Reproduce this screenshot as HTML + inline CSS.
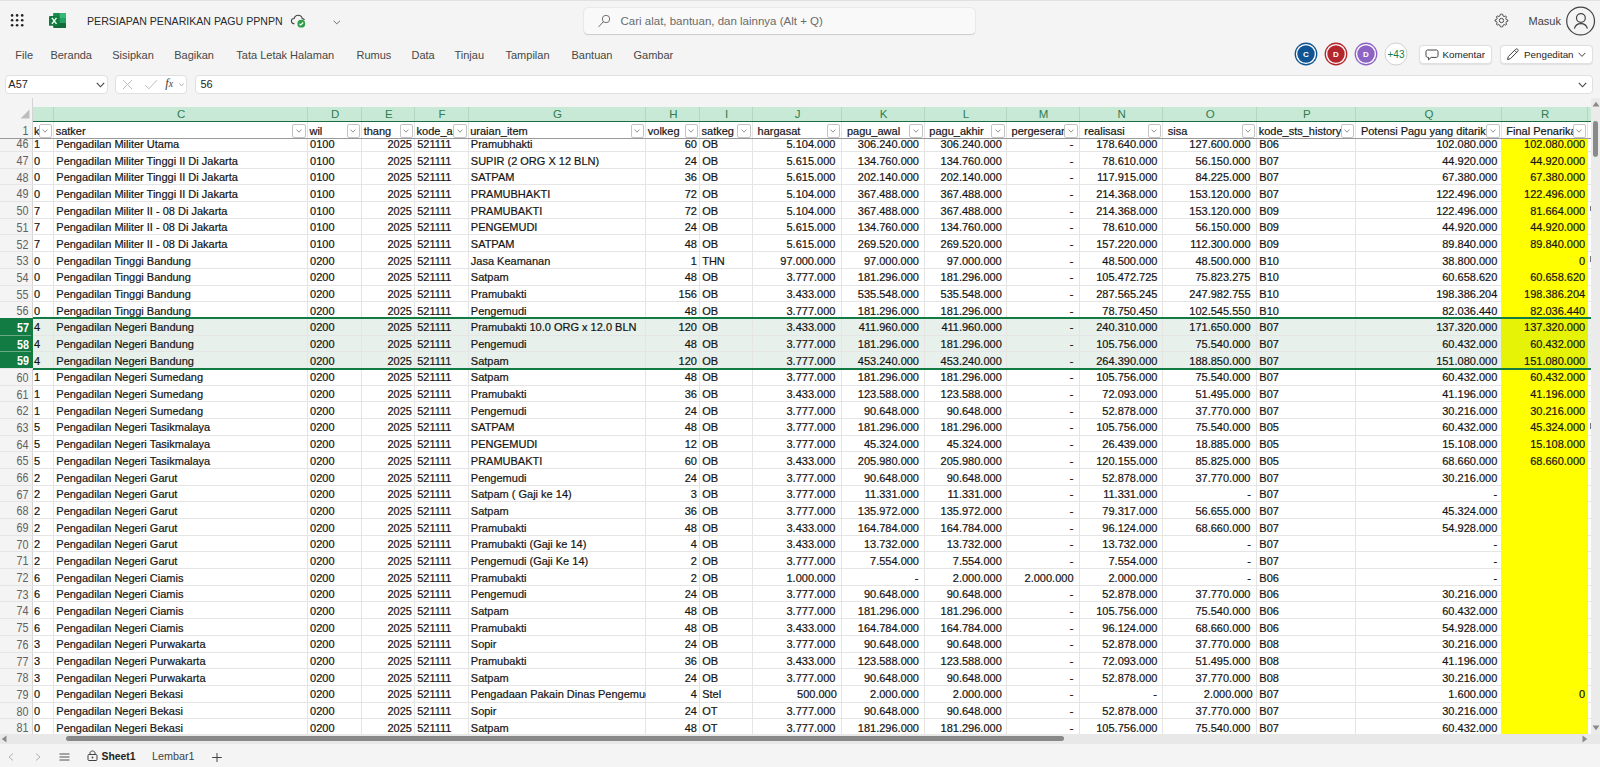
<!DOCTYPE html><html><head><meta charset="utf-8"><style>
*{box-sizing:border-box;margin:0;padding:0}
html,body{width:1600px;height:767px;overflow:hidden;background:#f4f4f4;font-family:"Liberation Sans", sans-serif;position:relative}
.a{position:absolute}
.t{position:absolute;white-space:pre;}
.c{position:absolute;white-space:pre;font-size:11px;color:#141414;-webkit-text-stroke:0.2px #141414;line-height:16.68px;height:16.68px;overflow:hidden}
.fb{position:absolute;width:13px;height:13px;background:#fff;border:1px solid #c4c4c4;border-radius:2px}
.fb svg{position:absolute;left:2.7px;top:4.3px}

</style></head><body>
<div class="a" style="left:0;top:0;width:1600px;height:1px;background:#e4dfe2"></div>
<svg class="a" style="left:9px;top:12px" width="16" height="16" viewBox="0 0 16 16"><circle cx="3.1" cy="3.4" r="1.3" fill="#242424"/><circle cx="8.1" cy="3.4" r="1.3" fill="#242424"/><circle cx="13.2" cy="3.4" r="1.3" fill="#242424"/><circle cx="3.1" cy="8.3" r="1.3" fill="#242424"/><circle cx="8.1" cy="8.3" r="1.3" fill="#242424"/><circle cx="13.2" cy="8.3" r="1.3" fill="#242424"/><circle cx="3.1" cy="13.2" r="1.3" fill="#242424"/><circle cx="8.1" cy="13.2" r="1.3" fill="#242424"/><circle cx="13.2" cy="13.2" r="1.3" fill="#242424"/></svg>
<svg class="a" style="left:49px;top:13px" width="17" height="15" viewBox="0 0 17 15">
<rect x="4.4" y="0" width="12.6" height="15" rx="0.8" fill="#1f9a5a"/>
<rect x="10.5" y="0" width="6.5" height="5" fill="#36b877"/>
<rect x="10.5" y="5" width="6.5" height="5" fill="#23a063"/>
<rect x="4.4" y="10" width="12.6" height="5" rx="0.8" fill="#146b3a"/>
<rect x="4.4" y="0" width="6.1" height="10" fill="#198a4c"/>
<rect x="0" y="3" width="10.4" height="9.8" rx="0.9" fill="#137a3f"/>
<path d="M2.9 4.9 L7.5 10.9 M7.5 4.9 L2.9 10.9" stroke="#e8fff0" stroke-width="1.5"/>
</svg>
<div class="t" style="left:87px;top:12.7px;font-size:10.6px;line-height:16px;color:#2a2a2a">PERSIAPAN PENARIKAN PAGU PPNPN</div>
<svg class="a" style="left:290px;top:13px" width="18" height="16" viewBox="0 0 18 16">
<path d="M4.5 10.8 C2.6 10.8 1.4 9.6 1.4 8.1 C1.4 6.6 2.6 5.5 4.1 5.5 C4.7 3.4 6.3 2.2 8.2 2.2 C10.3 2.2 11.9 3.7 12.3 5.6 C13.3 5.6 14.1 6.2 14.5 7" fill="none" stroke="#424242" stroke-width="1.1"/>
<circle cx="11.3" cy="10.7" r="3.9" fill="#2e9e48"/>
<path d="M9.4 10.8 L10.7 12 L13.2 9.5" fill="none" stroke="#fff" stroke-width="1.1"/>
</svg>
<svg class="a" style="left:332.5px;top:19.5px" width="8" height="5" viewBox="0 0 8 5"><path d="M0.6 0.8 L3.8 3.8 L7 0.8" fill="none" stroke="#616161" stroke-width="0.9"/></svg>
<div class="a" style="left:584px;top:7.5px;width:390.5px;height:26.5px;border-radius:4px;background:#f9f9f9;box-shadow:0 0.6px 1px rgba(0,0,0,0.14), 0 0 0 0.6px rgba(0,0,0,0.06)"></div>
<svg class="a" style="left:597px;top:14px" width="14" height="14" viewBox="0 0 14 14"><circle cx="9" cy="5" r="3.7" fill="none" stroke="#6a6a6a" stroke-width="0.95"/><path d="M6.3 7.8 L1.6 12.9" stroke="#6a6a6a" stroke-width="1"/></svg>
<div class="t" style="left:620.5px;top:13px;font-size:11.5px;line-height:16px;color:#6b6b6b">Cari alat, bantuan, dan lainnya (Alt + Q)</div>
<svg class="a" style="left:1493.5px;top:13.3px" width="15" height="15" viewBox="0 0 16 16">
<path d="M8 1.2 L9.3 1.4 L9.6 3.1 L10.8 3.8 L12.4 3.1 L13.3 4.1 L12.6 5.7 L13 7 L14.7 7.4 L14.8 8.7 L13.2 9.2 L12.7 10.5 L13.4 12 L12.5 13 L10.9 12.3 L9.7 13 L9.3 14.7 L8 14.8 L6.7 14.6 L6.3 13 L5.1 12.3 L3.5 13 L2.6 12 L3.3 10.4 L2.8 9.2 L1.2 8.7 L1.2 7.3 L2.8 6.9 L3.3 5.6 L2.6 4.1 L3.5 3.1 L5.1 3.8 L6.3 3.1 L6.7 1.4 Z" fill="none" stroke="#424242" stroke-width="1" stroke-linejoin="round"/>
<circle cx="8" cy="8" r="2.3" fill="none" stroke="#424242" stroke-width="1"/></svg>
<div class="t" style="left:1528.5px;top:13px;font-size:11px;line-height:16px;color:#424242">Masuk</div>
<svg class="a" style="left:1565px;top:6px" width="32" height="30" viewBox="0 0 32 30">
<circle cx="15.6" cy="15" r="13.9" fill="none" stroke="#424242" stroke-width="1.2"/>
<circle cx="15.9" cy="12" r="4.4" fill="none" stroke="#424242" stroke-width="1.2"/>
<path d="M9.4 22.6 C10.3 19.2 12.8 17.6 15.9 17.6 C19 17.6 21.5 19.2 22.4 22.6" fill="none" stroke="#424242" stroke-width="1.2"/>
</svg>
<div class="t" style="left:15.3px;top:46.8px;font-size:11px;line-height:16px;color:#474747">File</div>
<div class="t" style="left:50.4px;top:46.8px;font-size:11px;line-height:16px;color:#474747">Beranda</div>
<div class="t" style="left:112.2px;top:46.8px;font-size:11px;line-height:16px;color:#474747">Sisipkan</div>
<div class="t" style="left:174.2px;top:46.8px;font-size:11px;line-height:16px;color:#474747">Bagikan</div>
<div class="t" style="left:236.3px;top:46.8px;font-size:11px;line-height:16px;color:#474747">Tata Letak Halaman</div>
<div class="t" style="left:356.5px;top:46.8px;font-size:11px;line-height:16px;color:#474747">Rumus</div>
<div class="t" style="left:411.5px;top:46.8px;font-size:11px;line-height:16px;color:#474747">Data</div>
<div class="t" style="left:454.5px;top:46.8px;font-size:11px;line-height:16px;color:#474747">Tinjau</div>
<div class="t" style="left:505.5px;top:46.8px;font-size:11px;line-height:16px;color:#474747">Tampilan</div>
<div class="t" style="left:571.5px;top:46.8px;font-size:11px;line-height:16px;color:#474747">Bantuan</div>
<div class="t" style="left:633.5px;top:46.8px;font-size:11px;line-height:16px;color:#474747">Gambar</div>
<svg class="a" style="left:1294px;top:42px" width="24" height="24" viewBox="0 0 24 24">
<circle cx="12" cy="12" r="11.4" fill="#0f5493"/><circle cx="12" cy="12" r="9.4" fill="none" stroke="#fff" stroke-width="1.4"/>
<text x="12" y="14.9" text-anchor="middle" font-family="Liberation Sans" font-weight="bold" font-size="8" fill="#fff">C</text></svg>
<svg class="a" style="left:1324px;top:42px" width="24" height="24" viewBox="0 0 24 24">
<circle cx="12" cy="12" r="11.4" fill="#b3262d"/><circle cx="12" cy="12" r="9.4" fill="none" stroke="#fff" stroke-width="1.4"/>
<text x="12" y="14.9" text-anchor="middle" font-family="Liberation Sans" font-weight="bold" font-size="8" fill="#fff">D</text></svg>
<svg class="a" style="left:1354px;top:42px" width="24" height="24" viewBox="0 0 24 24">
<circle cx="12" cy="12" r="11.4" fill="#8d64c4"/><circle cx="12" cy="12" r="9.4" fill="none" stroke="#fff" stroke-width="1.4"/>
<text x="12" y="14.9" text-anchor="middle" font-family="Liberation Sans" font-weight="bold" font-size="8" fill="#fff">D</text></svg>
<svg class="a" style="left:1384px;top:42px" width="24" height="24" viewBox="0 0 24 24"><circle cx="12" cy="12" r="11" fill="#fff" stroke="#cccccc" stroke-width="0.9"/>
<text x="12" y="15.5" text-anchor="middle" font-family="Liberation Sans" font-size="10" fill="#107c41">+43</text></svg>
<div class="a" style="left:1418.5px;top:44.5px;width:73px;height:19px;background:#fff;border:1px solid #e0e0e0;border-radius:4px;box-shadow:0 0.5px 1px rgba(0,0,0,0.08)"></div>
<svg class="a" style="left:1425px;top:48.5px" width="14" height="12" viewBox="0 0 14 12"><path d="M2.6 1 H11.4 C12.3 1 13 1.7 13 2.6 V6.8 C13 7.7 12.3 8.4 11.4 8.4 H6.2 L3.6 10.8 V8.4 H2.6 C1.7 8.4 1 7.7 1 6.8 V2.6 C1 1.7 1.7 1 2.6 1 Z" fill="none" stroke="#424242" stroke-width="1"/></svg>
<div class="t" style="left:1442.5px;top:47px;font-size:9.8px;line-height:16px;color:#242424">Komentar</div>
<div class="a" style="left:1499.7px;top:44.5px;width:93.3px;height:19px;background:#fff;border:1px solid #e0e0e0;border-radius:4px;box-shadow:0 0.5px 1px rgba(0,0,0,0.08)"></div>
<svg class="a" style="left:1506px;top:47.5px" width="14" height="13" viewBox="0 0 14 13"><path d="M1.5 11.6 L2.3 8.6 L9.6 1.3 C10.2 0.7 11.1 0.7 11.7 1.3 C12.3 1.9 12.3 2.8 11.7 3.4 L4.4 10.7 Z M8.6 2.3 L10.7 4.4" fill="none" stroke="#424242" stroke-width="1"/></svg>
<div class="t" style="left:1524px;top:47px;font-size:9.8px;line-height:16px;color:#242424">Pengeditan</div>
<svg class="a" style="left:1577.5px;top:52px" width="8" height="6" viewBox="0 0 8 6"><path d="M0.6 0.8 L4 4.4 L7.4 0.8" fill="none" stroke="#424242" stroke-width="1"/></svg>
<div class="a" style="left:4.6px;top:74.5px;width:103px;height:19px;background:#fff;border:1px solid #e0e0e0;border-radius:4px"></div>
<div class="t" style="left:8.3px;top:75.5px;font-size:11px;line-height:16px;color:#242424">A57</div>
<svg class="a" style="left:96px;top:82px" width="9" height="6" viewBox="0 0 9 6"><path d="M0.8 0.8 L4.5 4.8 L8.2 0.8" fill="none" stroke="#424242" stroke-width="1.1"/></svg>
<div class="a" style="left:114.5px;top:74.5px;width:72px;height:19px;background:#fff;border:1px solid #e0e0e0;border-radius:4px"></div>
<svg class="a" style="left:121.5px;top:78.5px" width="11" height="11" viewBox="0 0 11 11"><path d="M1 1 L10 10 M10 1 L1 10" stroke="#bdbdbd" stroke-width="1"/></svg>
<svg class="a" style="left:143.5px;top:78.5px" width="14" height="11" viewBox="0 0 14 11"><path d="M1 6 L4.8 9.8 L13 1.2" fill="none" stroke="#bdbdbd" stroke-width="1"/></svg>
<div class="t" style="left:165.3px;top:75.3px;font-size:12.5px;line-height:16px;color:#424242;font-family:'Liberation Serif';font-style:italic">f<span style="font-size:10px">x</span></div>
<svg class="a" style="left:179px;top:82.5px" width="5" height="4" viewBox="0 0 5 4"><path d="M0.5 0.5 L2.5 3 L4.5 0.5" fill="none" stroke="#9e9e9e" stroke-width="0.8"/></svg>
<div class="a" style="left:194.5px;top:74.5px;width:1398.5px;height:19px;background:#fff;border:1px solid #e0e0e0;border-radius:4px"></div>
<div class="t" style="left:200.5px;top:75.5px;font-size:11px;line-height:16px;color:#242424">56</div>
<svg class="a" style="left:1577.5px;top:81.5px" width="9" height="6" viewBox="0 0 9 6"><path d="M0.8 0.8 L4.5 4.8 L8.2 0.8" fill="none" stroke="#424242" stroke-width="1.1"/></svg>
<div class="a" style="left:0;top:106.5px;width:32.5px;height:15.7px;background:#f4f4f4"></div>
<svg class="a" style="left:20px;top:109px" width="10" height="10" viewBox="0 0 10 10"><path d="M9.5 0.5 V9.5 H0.5 Z" fill="#bdbdbd"/></svg>
<div class="a" style="left:32px;top:98px;width:1px;height:636px;background:#d4d4d4"></div>
<div class="a" style="left:32.5px;top:106.5px;width:1558.5px;height:14px;background:#c9e9d7"></div>
<div class="a" style="left:32.5px;top:120.6px;width:1558.5px;height:1.7px;background:#1d6b40"></div>
<div class="a" style="left:53.0px;top:106.5px;width:1px;height:14px;background:#b2d8bf"></div>
<div class="a" style="left:306.75px;top:106.5px;width:1px;height:14px;background:#b2d8bf"></div>
<div class="a" style="left:361.0px;top:106.5px;width:1px;height:14px;background:#b2d8bf"></div>
<div class="a" style="left:413.9px;top:106.5px;width:1px;height:14px;background:#b2d8bf"></div>
<div class="a" style="left:467.5px;top:106.5px;width:1px;height:14px;background:#b2d8bf"></div>
<div class="a" style="left:645.1px;top:106.5px;width:1px;height:14px;background:#b2d8bf"></div>
<div class="a" style="left:698.9px;top:106.5px;width:1px;height:14px;background:#b2d8bf"></div>
<div class="a" style="left:751.75px;top:106.5px;width:1px;height:14px;background:#b2d8bf"></div>
<div class="a" style="left:841.1px;top:106.5px;width:1px;height:14px;background:#b2d8bf"></div>
<div class="a" style="left:923.5px;top:106.5px;width:1px;height:14px;background:#b2d8bf"></div>
<div class="a" style="left:1005.75px;top:106.5px;width:1px;height:14px;background:#b2d8bf"></div>
<div class="a" style="left:1078.5px;top:106.5px;width:1px;height:14px;background:#b2d8bf"></div>
<div class="a" style="left:1162.0px;top:106.5px;width:1px;height:14px;background:#b2d8bf"></div>
<div class="a" style="left:1256.0px;top:106.5px;width:1px;height:14px;background:#b2d8bf"></div>
<div class="a" style="left:1355.1px;top:106.5px;width:1px;height:14px;background:#b2d8bf"></div>
<div class="a" style="left:1500.5px;top:106.5px;width:1px;height:14px;background:#b2d8bf"></div>
<div class="a" style="left:1587.1px;top:106.5px;width:1px;height:14px;background:#b2d8bf"></div>
<div class="t" style="left:54.3px;top:107px;width:253.75px;text-align:center;font-size:11.5px;line-height:14px;color:#2f7d50">C</div>
<div class="t" style="left:308.05px;top:107px;width:54.25px;text-align:center;font-size:11.5px;line-height:14px;color:#2f7d50">D</div>
<div class="t" style="left:362.3px;top:107px;width:52.89999999999998px;text-align:center;font-size:11.5px;line-height:14px;color:#2f7d50">E</div>
<div class="t" style="left:415.2px;top:107px;width:53.60000000000002px;text-align:center;font-size:11.5px;line-height:14px;color:#2f7d50">F</div>
<div class="t" style="left:468.8px;top:107px;width:177.60000000000002px;text-align:center;font-size:11.5px;line-height:14px;color:#2f7d50">G</div>
<div class="t" style="left:646.4px;top:107px;width:53.799999999999955px;text-align:center;font-size:11.5px;line-height:14px;color:#2f7d50">H</div>
<div class="t" style="left:700.1999999999999px;top:107px;width:52.85000000000002px;text-align:center;font-size:11.5px;line-height:14px;color:#2f7d50">I</div>
<div class="t" style="left:753.05px;top:107px;width:89.35000000000002px;text-align:center;font-size:11.5px;line-height:14px;color:#2f7d50">J</div>
<div class="t" style="left:842.4px;top:107px;width:82.39999999999998px;text-align:center;font-size:11.5px;line-height:14px;color:#2f7d50">K</div>
<div class="t" style="left:924.8px;top:107px;width:82.25px;text-align:center;font-size:11.5px;line-height:14px;color:#2f7d50">L</div>
<div class="t" style="left:1007.05px;top:107px;width:72.75px;text-align:center;font-size:11.5px;line-height:14px;color:#2f7d50">M</div>
<div class="t" style="left:1079.8px;top:107px;width:83.5px;text-align:center;font-size:11.5px;line-height:14px;color:#2f7d50">N</div>
<div class="t" style="left:1163.3px;top:107px;width:94.0px;text-align:center;font-size:11.5px;line-height:14px;color:#2f7d50">O</div>
<div class="t" style="left:1257.3px;top:107px;width:99.09999999999991px;text-align:center;font-size:11.5px;line-height:14px;color:#2f7d50">P</div>
<div class="t" style="left:1356.3999999999999px;top:107px;width:145.4000000000001px;text-align:center;font-size:11.5px;line-height:14px;color:#2f7d50">Q</div>
<div class="t" style="left:1501.8px;top:107px;width:86.59999999999991px;text-align:center;font-size:11.5px;line-height:14px;color:#2f7d50">R</div>
<div class="a" style="left:33px;top:122.3px;width:1558px;height:611.7px;background:#fff"></div>
<div class="a" style="left:0;top:122.3px;width:32px;height:611.7px;background:#f4f4f4"></div>
<div class="a" style="left:1501px;top:138.5px;width:86.59999999999991px;height:595.5px;background:#ffff00"></div>
<div class="a" style="left:33px;top:318px;width:1468px;height:50px;background:#e7f0ea"></div>
<div class="a" style="left:1501px;top:318px;width:86.59999999999991px;height:50px;background:#e6f206"></div>
<div class="a" style="left:1587.6px;top:318px;width:3.400000000000091px;height:50px;background:#e7f0ea"></div>
<div class="a" style="left:0;top:151px;width:1501px;height:1px;background:#e5e5e5"></div>
<div class="a" style="left:1587.6px;top:151px;width:3.400000000000091px;height:1px;background:#e5e5e5"></div>
<div class="a" style="left:0;top:168px;width:1501px;height:1px;background:#e5e5e5"></div>
<div class="a" style="left:1587.6px;top:168px;width:3.400000000000091px;height:1px;background:#e5e5e5"></div>
<div class="a" style="left:0;top:184px;width:1501px;height:1px;background:#e5e5e5"></div>
<div class="a" style="left:1587.6px;top:184px;width:3.400000000000091px;height:1px;background:#e5e5e5"></div>
<div class="a" style="left:0;top:201px;width:1501px;height:1px;background:#e5e5e5"></div>
<div class="a" style="left:1587.6px;top:201px;width:3.400000000000091px;height:1px;background:#e5e5e5"></div>
<div class="a" style="left:0;top:218px;width:1501px;height:1px;background:#e5e5e5"></div>
<div class="a" style="left:1587.6px;top:218px;width:3.400000000000091px;height:1px;background:#e5e5e5"></div>
<div class="a" style="left:0;top:234px;width:1501px;height:1px;background:#e5e5e5"></div>
<div class="a" style="left:1587.6px;top:234px;width:3.400000000000091px;height:1px;background:#e5e5e5"></div>
<div class="a" style="left:0;top:251px;width:1501px;height:1px;background:#e5e5e5"></div>
<div class="a" style="left:1587.6px;top:251px;width:3.400000000000091px;height:1px;background:#e5e5e5"></div>
<div class="a" style="left:0;top:268px;width:1501px;height:1px;background:#e5e5e5"></div>
<div class="a" style="left:1587.6px;top:268px;width:3.400000000000091px;height:1px;background:#e5e5e5"></div>
<div class="a" style="left:0;top:285px;width:1501px;height:1px;background:#e5e5e5"></div>
<div class="a" style="left:1587.6px;top:285px;width:3.400000000000091px;height:1px;background:#e5e5e5"></div>
<div class="a" style="left:0;top:301px;width:1501px;height:1px;background:#e5e5e5"></div>
<div class="a" style="left:1587.6px;top:301px;width:3.400000000000091px;height:1px;background:#e5e5e5"></div>
<div class="a" style="left:0;top:318px;width:1501px;height:1px;background:#e5e5e5"></div>
<div class="a" style="left:1587.6px;top:318px;width:3.400000000000091px;height:1px;background:#e5e5e5"></div>
<div class="a" style="left:0;top:335px;width:1501px;height:1px;background:#e5e5e5"></div>
<div class="a" style="left:1587.6px;top:335px;width:3.400000000000091px;height:1px;background:#e5e5e5"></div>
<div class="a" style="left:0;top:351px;width:1501px;height:1px;background:#e5e5e5"></div>
<div class="a" style="left:1587.6px;top:351px;width:3.400000000000091px;height:1px;background:#e5e5e5"></div>
<div class="a" style="left:0;top:368px;width:1501px;height:1px;background:#e5e5e5"></div>
<div class="a" style="left:1587.6px;top:368px;width:3.400000000000091px;height:1px;background:#e5e5e5"></div>
<div class="a" style="left:0;top:385px;width:1501px;height:1px;background:#e5e5e5"></div>
<div class="a" style="left:1587.6px;top:385px;width:3.400000000000091px;height:1px;background:#e5e5e5"></div>
<div class="a" style="left:0;top:401px;width:1501px;height:1px;background:#e5e5e5"></div>
<div class="a" style="left:1587.6px;top:401px;width:3.400000000000091px;height:1px;background:#e5e5e5"></div>
<div class="a" style="left:0;top:418px;width:1501px;height:1px;background:#e5e5e5"></div>
<div class="a" style="left:1587.6px;top:418px;width:3.400000000000091px;height:1px;background:#e5e5e5"></div>
<div class="a" style="left:0;top:435px;width:1501px;height:1px;background:#e5e5e5"></div>
<div class="a" style="left:1587.6px;top:435px;width:3.400000000000091px;height:1px;background:#e5e5e5"></div>
<div class="a" style="left:0;top:451px;width:1501px;height:1px;background:#e5e5e5"></div>
<div class="a" style="left:1587.6px;top:451px;width:3.400000000000091px;height:1px;background:#e5e5e5"></div>
<div class="a" style="left:0;top:468px;width:1501px;height:1px;background:#e5e5e5"></div>
<div class="a" style="left:1587.6px;top:468px;width:3.400000000000091px;height:1px;background:#e5e5e5"></div>
<div class="a" style="left:0;top:485px;width:1501px;height:1px;background:#e5e5e5"></div>
<div class="a" style="left:1587.6px;top:485px;width:3.400000000000091px;height:1px;background:#e5e5e5"></div>
<div class="a" style="left:0;top:501px;width:1501px;height:1px;background:#e5e5e5"></div>
<div class="a" style="left:1587.6px;top:501px;width:3.400000000000091px;height:1px;background:#e5e5e5"></div>
<div class="a" style="left:0;top:518px;width:1501px;height:1px;background:#e5e5e5"></div>
<div class="a" style="left:1587.6px;top:518px;width:3.400000000000091px;height:1px;background:#e5e5e5"></div>
<div class="a" style="left:0;top:535px;width:1501px;height:1px;background:#e5e5e5"></div>
<div class="a" style="left:1587.6px;top:535px;width:3.400000000000091px;height:1px;background:#e5e5e5"></div>
<div class="a" style="left:0;top:551px;width:1501px;height:1px;background:#e5e5e5"></div>
<div class="a" style="left:1587.6px;top:551px;width:3.400000000000091px;height:1px;background:#e5e5e5"></div>
<div class="a" style="left:0;top:568px;width:1501px;height:1px;background:#e5e5e5"></div>
<div class="a" style="left:1587.6px;top:568px;width:3.400000000000091px;height:1px;background:#e5e5e5"></div>
<div class="a" style="left:0;top:585px;width:1501px;height:1px;background:#e5e5e5"></div>
<div class="a" style="left:1587.6px;top:585px;width:3.400000000000091px;height:1px;background:#e5e5e5"></div>
<div class="a" style="left:0;top:601px;width:1501px;height:1px;background:#e5e5e5"></div>
<div class="a" style="left:1587.6px;top:601px;width:3.400000000000091px;height:1px;background:#e5e5e5"></div>
<div class="a" style="left:0;top:618px;width:1501px;height:1px;background:#e5e5e5"></div>
<div class="a" style="left:1587.6px;top:618px;width:3.400000000000091px;height:1px;background:#e5e5e5"></div>
<div class="a" style="left:0;top:635px;width:1501px;height:1px;background:#e5e5e5"></div>
<div class="a" style="left:1587.6px;top:635px;width:3.400000000000091px;height:1px;background:#e5e5e5"></div>
<div class="a" style="left:0;top:652px;width:1501px;height:1px;background:#e5e5e5"></div>
<div class="a" style="left:1587.6px;top:652px;width:3.400000000000091px;height:1px;background:#e5e5e5"></div>
<div class="a" style="left:0;top:668px;width:1501px;height:1px;background:#e5e5e5"></div>
<div class="a" style="left:1587.6px;top:668px;width:3.400000000000091px;height:1px;background:#e5e5e5"></div>
<div class="a" style="left:0;top:685px;width:1501px;height:1px;background:#e5e5e5"></div>
<div class="a" style="left:1587.6px;top:685px;width:3.400000000000091px;height:1px;background:#e5e5e5"></div>
<div class="a" style="left:0;top:702px;width:1501px;height:1px;background:#e5e5e5"></div>
<div class="a" style="left:1587.6px;top:702px;width:3.400000000000091px;height:1px;background:#e5e5e5"></div>
<div class="a" style="left:0;top:718px;width:1501px;height:1px;background:#e5e5e5"></div>
<div class="a" style="left:1587.6px;top:718px;width:3.400000000000091px;height:1px;background:#e5e5e5"></div>
<div class="a" style="left:53.0px;top:138.5px;width:1px;height:595.5px;background:#e5e5e5"></div>
<div class="a" style="left:306.75px;top:138.5px;width:1px;height:595.5px;background:#e5e5e5"></div>
<div class="a" style="left:361.0px;top:138.5px;width:1px;height:595.5px;background:#e5e5e5"></div>
<div class="a" style="left:413.9px;top:138.5px;width:1px;height:595.5px;background:#e5e5e5"></div>
<div class="a" style="left:467.5px;top:138.5px;width:1px;height:595.5px;background:#e5e5e5"></div>
<div class="a" style="left:645.1px;top:138.5px;width:1px;height:595.5px;background:#e5e5e5"></div>
<div class="a" style="left:698.9px;top:138.5px;width:1px;height:595.5px;background:#e5e5e5"></div>
<div class="a" style="left:751.75px;top:138.5px;width:1px;height:595.5px;background:#e5e5e5"></div>
<div class="a" style="left:841.1px;top:138.5px;width:1px;height:595.5px;background:#e5e5e5"></div>
<div class="a" style="left:923.5px;top:138.5px;width:1px;height:595.5px;background:#e5e5e5"></div>
<div class="a" style="left:1005.75px;top:138.5px;width:1px;height:595.5px;background:#e5e5e5"></div>
<div class="a" style="left:1078.5px;top:138.5px;width:1px;height:595.5px;background:#e5e5e5"></div>
<div class="a" style="left:1162.0px;top:138.5px;width:1px;height:595.5px;background:#e5e5e5"></div>
<div class="a" style="left:1256.0px;top:138.5px;width:1px;height:595.5px;background:#e5e5e5"></div>
<div class="a" style="left:1355.1px;top:138.5px;width:1px;height:595.5px;background:#e5e5e5"></div>
<div class="t" style="left:0;top:136.42px;width:28.6px;text-align:right;font-size:10.8px;line-height:16.68px;color:#616161;transform:scaleY(1.1);transform-origin:0 60%">46</div>
<div class="t" style="left:0;top:153.1px;width:28.6px;text-align:right;font-size:10.8px;line-height:16.68px;color:#616161;transform:scaleY(1.1);transform-origin:0 60%">47</div>
<div class="t" style="left:0;top:169.78px;width:28.6px;text-align:right;font-size:10.8px;line-height:16.68px;color:#616161;transform:scaleY(1.1);transform-origin:0 60%">48</div>
<div class="t" style="left:0;top:186.45999999999998px;width:28.6px;text-align:right;font-size:10.8px;line-height:16.68px;color:#616161;transform:scaleY(1.1);transform-origin:0 60%">49</div>
<div class="t" style="left:0;top:203.14px;width:28.6px;text-align:right;font-size:10.8px;line-height:16.68px;color:#616161;transform:scaleY(1.1);transform-origin:0 60%">50</div>
<div class="t" style="left:0;top:219.82px;width:28.6px;text-align:right;font-size:10.8px;line-height:16.68px;color:#616161;transform:scaleY(1.1);transform-origin:0 60%">51</div>
<div class="t" style="left:0;top:236.5px;width:28.6px;text-align:right;font-size:10.8px;line-height:16.68px;color:#616161;transform:scaleY(1.1);transform-origin:0 60%">52</div>
<div class="t" style="left:0;top:253.18px;width:28.6px;text-align:right;font-size:10.8px;line-height:16.68px;color:#616161;transform:scaleY(1.1);transform-origin:0 60%">53</div>
<div class="t" style="left:0;top:269.86px;width:28.6px;text-align:right;font-size:10.8px;line-height:16.68px;color:#616161;transform:scaleY(1.1);transform-origin:0 60%">54</div>
<div class="t" style="left:0;top:286.53999999999996px;width:28.6px;text-align:right;font-size:10.8px;line-height:16.68px;color:#616161;transform:scaleY(1.1);transform-origin:0 60%">55</div>
<div class="t" style="left:0;top:303.22px;width:28.6px;text-align:right;font-size:10.8px;line-height:16.68px;color:#616161;transform:scaleY(1.1);transform-origin:0 60%">56</div>
<div class="a" style="left:0;top:318px;width:32.5px;height:17px;background:#127b43"></div>
<div class="t" style="left:0;top:319.9px;width:29px;text-align:right;font-size:10.8px;font-weight:bold;line-height:16.68px;color:#fff;transform:scaleY(1.1);transform-origin:0 60%">57</div>
<div class="a" style="left:0;top:335px;width:32.5px;height:16px;background:#127b43"></div>
<div class="t" style="left:0;top:336.58px;width:29px;text-align:right;font-size:10.8px;font-weight:bold;line-height:16.68px;color:#fff;transform:scaleY(1.1);transform-origin:0 60%">58</div>
<div class="a" style="left:0;top:351px;width:32.5px;height:17px;background:#127b43"></div>
<div class="t" style="left:0;top:353.26px;width:29px;text-align:right;font-size:10.8px;font-weight:bold;line-height:16.68px;color:#fff;transform:scaleY(1.1);transform-origin:0 60%">59</div>
<div class="t" style="left:0;top:369.94px;width:28.6px;text-align:right;font-size:10.8px;line-height:16.68px;color:#616161;transform:scaleY(1.1);transform-origin:0 60%">60</div>
<div class="t" style="left:0;top:386.62px;width:28.6px;text-align:right;font-size:10.8px;line-height:16.68px;color:#616161;transform:scaleY(1.1);transform-origin:0 60%">61</div>
<div class="t" style="left:0;top:403.29999999999995px;width:28.6px;text-align:right;font-size:10.8px;line-height:16.68px;color:#616161;transform:scaleY(1.1);transform-origin:0 60%">62</div>
<div class="t" style="left:0;top:419.98px;width:28.6px;text-align:right;font-size:10.8px;line-height:16.68px;color:#616161;transform:scaleY(1.1);transform-origin:0 60%">63</div>
<div class="t" style="left:0;top:436.65999999999997px;width:28.6px;text-align:right;font-size:10.8px;line-height:16.68px;color:#616161;transform:scaleY(1.1);transform-origin:0 60%">64</div>
<div class="t" style="left:0;top:453.34000000000003px;width:28.6px;text-align:right;font-size:10.8px;line-height:16.68px;color:#616161;transform:scaleY(1.1);transform-origin:0 60%">65</div>
<div class="t" style="left:0;top:470.02px;width:28.6px;text-align:right;font-size:10.8px;line-height:16.68px;color:#616161;transform:scaleY(1.1);transform-origin:0 60%">66</div>
<div class="t" style="left:0;top:486.70000000000005px;width:28.6px;text-align:right;font-size:10.8px;line-height:16.68px;color:#616161;transform:scaleY(1.1);transform-origin:0 60%">67</div>
<div class="t" style="left:0;top:503.38px;width:28.6px;text-align:right;font-size:10.8px;line-height:16.68px;color:#616161;transform:scaleY(1.1);transform-origin:0 60%">68</div>
<div class="t" style="left:0;top:520.06px;width:28.6px;text-align:right;font-size:10.8px;line-height:16.68px;color:#616161;transform:scaleY(1.1);transform-origin:0 60%">69</div>
<div class="t" style="left:0;top:536.74px;width:28.6px;text-align:right;font-size:10.8px;line-height:16.68px;color:#616161;transform:scaleY(1.1);transform-origin:0 60%">70</div>
<div class="t" style="left:0;top:553.42px;width:28.6px;text-align:right;font-size:10.8px;line-height:16.68px;color:#616161;transform:scaleY(1.1);transform-origin:0 60%">71</div>
<div class="t" style="left:0;top:570.1px;width:28.6px;text-align:right;font-size:10.8px;line-height:16.68px;color:#616161;transform:scaleY(1.1);transform-origin:0 60%">72</div>
<div class="t" style="left:0;top:586.78px;width:28.6px;text-align:right;font-size:10.8px;line-height:16.68px;color:#616161;transform:scaleY(1.1);transform-origin:0 60%">73</div>
<div class="t" style="left:0;top:603.46px;width:28.6px;text-align:right;font-size:10.8px;line-height:16.68px;color:#616161;transform:scaleY(1.1);transform-origin:0 60%">74</div>
<div class="t" style="left:0;top:620.14px;width:28.6px;text-align:right;font-size:10.8px;line-height:16.68px;color:#616161;transform:scaleY(1.1);transform-origin:0 60%">75</div>
<div class="t" style="left:0;top:636.8199999999999px;width:28.6px;text-align:right;font-size:10.8px;line-height:16.68px;color:#616161;transform:scaleY(1.1);transform-origin:0 60%">76</div>
<div class="t" style="left:0;top:653.5px;width:28.6px;text-align:right;font-size:10.8px;line-height:16.68px;color:#616161;transform:scaleY(1.1);transform-origin:0 60%">77</div>
<div class="t" style="left:0;top:670.1800000000001px;width:28.6px;text-align:right;font-size:10.8px;line-height:16.68px;color:#616161;transform:scaleY(1.1);transform-origin:0 60%">78</div>
<div class="t" style="left:0;top:686.86px;width:28.6px;text-align:right;font-size:10.8px;line-height:16.68px;color:#616161;transform:scaleY(1.1);transform-origin:0 60%">79</div>
<div class="t" style="left:0;top:703.54px;width:28.6px;text-align:right;font-size:10.8px;line-height:16.68px;color:#616161;transform:scaleY(1.1);transform-origin:0 60%">80</div>
<div class="t" style="left:0;top:720.22px;width:28.6px;text-align:right;font-size:10.8px;line-height:16.68px;color:#616161;transform:scaleY(1.1);transform-origin:0 60%">81</div>
<div class="a" style="left:0;top:335px;width:31px;height:1px;background:#6aa886"></div>
<div class="a" style="left:0;top:351px;width:31px;height:1px;background:#6aa886"></div>
<div class="c" style="left:32.5px;top:135.92px;width:21.0px;padding-left:1.5px">1</div>
<div class="c" style="left:53.5px;top:135.92px;width:253.75px;padding-left:2.8px">Pengadilan Militer Utama</div>
<div class="c" style="left:307.25px;top:135.92px;width:54.25px;padding-left:2.8px">0100</div>
<div class="c" style="left:361.5px;top:135.92px;width:52.89999999999998px;padding-right:2.5px;text-align:right">2025</div>
<div class="c" style="left:414.4px;top:135.92px;width:53.60000000000002px;padding-left:2.8px">521111</div>
<div class="c" style="left:468px;top:135.92px;width:177.60000000000002px;padding-left:2.8px">Pramubhakti</div>
<div class="c" style="left:645.6px;top:135.92px;width:53.799999999999955px;padding-right:2.5px;text-align:right">60</div>
<div class="c" style="left:699.4px;top:135.92px;width:52.85000000000002px;padding-left:2.8px">OB</div>
<div class="c" style="left:752.25px;top:135.92px;width:89.35000000000002px;padding-right:6.2px;text-align:right">5.104.000</div>
<div class="c" style="left:841.6px;top:135.92px;width:82.39999999999998px;padding-right:5.0px;text-align:right">306.240.000</div>
<div class="c" style="left:924px;top:135.92px;width:82.25px;padding-right:4.5px;text-align:right">306.240.000</div>
<div class="c" style="left:1006.25px;top:135.92px;width:72.75px;padding-right:5.5px;text-align:right">-</div>
<div class="c" style="left:1079px;top:135.92px;width:83.5px;padding-right:5.1px;text-align:right">178.640.000</div>
<div class="c" style="left:1162.5px;top:135.92px;width:94.0px;padding-right:6.0px;text-align:right">127.600.000</div>
<div class="c" style="left:1256.5px;top:135.92px;width:99.09999999999991px;padding-left:2.8px">B06</div>
<div class="c" style="left:1355.6px;top:135.92px;width:145.4000000000001px;padding-right:3.7px;text-align:right">102.080.000</div>
<div class="c" style="left:1501px;top:135.92px;width:86.59999999999991px;padding-right:2.4px;text-align:right">102.080.000</div>
<div class="c" style="left:32.5px;top:152.6px;width:21.0px;padding-left:1.5px">0</div>
<div class="c" style="left:53.5px;top:152.6px;width:253.75px;padding-left:2.8px">Pengadilan Militer Tinggi II Di Jakarta</div>
<div class="c" style="left:307.25px;top:152.6px;width:54.25px;padding-left:2.8px">0100</div>
<div class="c" style="left:361.5px;top:152.6px;width:52.89999999999998px;padding-right:2.5px;text-align:right">2025</div>
<div class="c" style="left:414.4px;top:152.6px;width:53.60000000000002px;padding-left:2.8px">521111</div>
<div class="c" style="left:468px;top:152.6px;width:177.60000000000002px;padding-left:2.8px">SUPIR (2 ORG X 12 BLN)</div>
<div class="c" style="left:645.6px;top:152.6px;width:53.799999999999955px;padding-right:2.5px;text-align:right">24</div>
<div class="c" style="left:699.4px;top:152.6px;width:52.85000000000002px;padding-left:2.8px">OB</div>
<div class="c" style="left:752.25px;top:152.6px;width:89.35000000000002px;padding-right:6.2px;text-align:right">5.615.000</div>
<div class="c" style="left:841.6px;top:152.6px;width:82.39999999999998px;padding-right:5.0px;text-align:right">134.760.000</div>
<div class="c" style="left:924px;top:152.6px;width:82.25px;padding-right:4.5px;text-align:right">134.760.000</div>
<div class="c" style="left:1006.25px;top:152.6px;width:72.75px;padding-right:5.5px;text-align:right">-</div>
<div class="c" style="left:1079px;top:152.6px;width:83.5px;padding-right:5.1px;text-align:right">78.610.000</div>
<div class="c" style="left:1162.5px;top:152.6px;width:94.0px;padding-right:6.0px;text-align:right">56.150.000</div>
<div class="c" style="left:1256.5px;top:152.6px;width:99.09999999999991px;padding-left:2.8px">B07</div>
<div class="c" style="left:1355.6px;top:152.6px;width:145.4000000000001px;padding-right:3.7px;text-align:right">44.920.000</div>
<div class="c" style="left:1501px;top:152.6px;width:86.59999999999991px;padding-right:2.4px;text-align:right">44.920.000</div>
<div class="c" style="left:32.5px;top:169.28px;width:21.0px;padding-left:1.5px">0</div>
<div class="c" style="left:53.5px;top:169.28px;width:253.75px;padding-left:2.8px">Pengadilan Militer Tinggi II Di Jakarta</div>
<div class="c" style="left:307.25px;top:169.28px;width:54.25px;padding-left:2.8px">0100</div>
<div class="c" style="left:361.5px;top:169.28px;width:52.89999999999998px;padding-right:2.5px;text-align:right">2025</div>
<div class="c" style="left:414.4px;top:169.28px;width:53.60000000000002px;padding-left:2.8px">521111</div>
<div class="c" style="left:468px;top:169.28px;width:177.60000000000002px;padding-left:2.8px">SATPAM</div>
<div class="c" style="left:645.6px;top:169.28px;width:53.799999999999955px;padding-right:2.5px;text-align:right">36</div>
<div class="c" style="left:699.4px;top:169.28px;width:52.85000000000002px;padding-left:2.8px">OB</div>
<div class="c" style="left:752.25px;top:169.28px;width:89.35000000000002px;padding-right:6.2px;text-align:right">5.615.000</div>
<div class="c" style="left:841.6px;top:169.28px;width:82.39999999999998px;padding-right:5.0px;text-align:right">202.140.000</div>
<div class="c" style="left:924px;top:169.28px;width:82.25px;padding-right:4.5px;text-align:right">202.140.000</div>
<div class="c" style="left:1006.25px;top:169.28px;width:72.75px;padding-right:5.5px;text-align:right">-</div>
<div class="c" style="left:1079px;top:169.28px;width:83.5px;padding-right:5.1px;text-align:right">117.915.000</div>
<div class="c" style="left:1162.5px;top:169.28px;width:94.0px;padding-right:6.0px;text-align:right">84.225.000</div>
<div class="c" style="left:1256.5px;top:169.28px;width:99.09999999999991px;padding-left:2.8px">B07</div>
<div class="c" style="left:1355.6px;top:169.28px;width:145.4000000000001px;padding-right:3.7px;text-align:right">67.380.000</div>
<div class="c" style="left:1501px;top:169.28px;width:86.59999999999991px;padding-right:2.4px;text-align:right">67.380.000</div>
<div class="c" style="left:32.5px;top:185.96px;width:21.0px;padding-left:1.5px">0</div>
<div class="c" style="left:53.5px;top:185.96px;width:253.75px;padding-left:2.8px">Pengadilan Militer Tinggi II Di Jakarta</div>
<div class="c" style="left:307.25px;top:185.96px;width:54.25px;padding-left:2.8px">0100</div>
<div class="c" style="left:361.5px;top:185.96px;width:52.89999999999998px;padding-right:2.5px;text-align:right">2025</div>
<div class="c" style="left:414.4px;top:185.96px;width:53.60000000000002px;padding-left:2.8px">521111</div>
<div class="c" style="left:468px;top:185.96px;width:177.60000000000002px;padding-left:2.8px">PRAMUBHAKTI</div>
<div class="c" style="left:645.6px;top:185.96px;width:53.799999999999955px;padding-right:2.5px;text-align:right">72</div>
<div class="c" style="left:699.4px;top:185.96px;width:52.85000000000002px;padding-left:2.8px">OB</div>
<div class="c" style="left:752.25px;top:185.96px;width:89.35000000000002px;padding-right:6.2px;text-align:right">5.104.000</div>
<div class="c" style="left:841.6px;top:185.96px;width:82.39999999999998px;padding-right:5.0px;text-align:right">367.488.000</div>
<div class="c" style="left:924px;top:185.96px;width:82.25px;padding-right:4.5px;text-align:right">367.488.000</div>
<div class="c" style="left:1006.25px;top:185.96px;width:72.75px;padding-right:5.5px;text-align:right">-</div>
<div class="c" style="left:1079px;top:185.96px;width:83.5px;padding-right:5.1px;text-align:right">214.368.000</div>
<div class="c" style="left:1162.5px;top:185.96px;width:94.0px;padding-right:6.0px;text-align:right">153.120.000</div>
<div class="c" style="left:1256.5px;top:185.96px;width:99.09999999999991px;padding-left:2.8px">B07</div>
<div class="c" style="left:1355.6px;top:185.96px;width:145.4000000000001px;padding-right:3.7px;text-align:right">122.496.000</div>
<div class="c" style="left:1501px;top:185.96px;width:86.59999999999991px;padding-right:2.4px;text-align:right">122.496.000</div>
<div class="c" style="left:32.5px;top:202.64px;width:21.0px;padding-left:1.5px">7</div>
<div class="c" style="left:53.5px;top:202.64px;width:253.75px;padding-left:2.8px">Pengadilan Militer II - 08 Di Jakarta</div>
<div class="c" style="left:307.25px;top:202.64px;width:54.25px;padding-left:2.8px">0100</div>
<div class="c" style="left:361.5px;top:202.64px;width:52.89999999999998px;padding-right:2.5px;text-align:right">2025</div>
<div class="c" style="left:414.4px;top:202.64px;width:53.60000000000002px;padding-left:2.8px">521111</div>
<div class="c" style="left:468px;top:202.64px;width:177.60000000000002px;padding-left:2.8px">PRAMUBAKTI</div>
<div class="c" style="left:645.6px;top:202.64px;width:53.799999999999955px;padding-right:2.5px;text-align:right">72</div>
<div class="c" style="left:699.4px;top:202.64px;width:52.85000000000002px;padding-left:2.8px">OB</div>
<div class="c" style="left:752.25px;top:202.64px;width:89.35000000000002px;padding-right:6.2px;text-align:right">5.104.000</div>
<div class="c" style="left:841.6px;top:202.64px;width:82.39999999999998px;padding-right:5.0px;text-align:right">367.488.000</div>
<div class="c" style="left:924px;top:202.64px;width:82.25px;padding-right:4.5px;text-align:right">367.488.000</div>
<div class="c" style="left:1006.25px;top:202.64px;width:72.75px;padding-right:5.5px;text-align:right">-</div>
<div class="c" style="left:1079px;top:202.64px;width:83.5px;padding-right:5.1px;text-align:right">214.368.000</div>
<div class="c" style="left:1162.5px;top:202.64px;width:94.0px;padding-right:6.0px;text-align:right">153.120.000</div>
<div class="c" style="left:1256.5px;top:202.64px;width:99.09999999999991px;padding-left:2.8px">B09</div>
<div class="c" style="left:1355.6px;top:202.64px;width:145.4000000000001px;padding-right:3.7px;text-align:right">122.496.000</div>
<div class="c" style="left:1501px;top:202.64px;width:86.59999999999991px;padding-right:2.4px;text-align:right">81.664.000</div>
<div class="c" style="left:32.5px;top:219.32px;width:21.0px;padding-left:1.5px">7</div>
<div class="c" style="left:53.5px;top:219.32px;width:253.75px;padding-left:2.8px">Pengadilan Militer II - 08 Di Jakarta</div>
<div class="c" style="left:307.25px;top:219.32px;width:54.25px;padding-left:2.8px">0100</div>
<div class="c" style="left:361.5px;top:219.32px;width:52.89999999999998px;padding-right:2.5px;text-align:right">2025</div>
<div class="c" style="left:414.4px;top:219.32px;width:53.60000000000002px;padding-left:2.8px">521111</div>
<div class="c" style="left:468px;top:219.32px;width:177.60000000000002px;padding-left:2.8px">PENGEMUDI</div>
<div class="c" style="left:645.6px;top:219.32px;width:53.799999999999955px;padding-right:2.5px;text-align:right">24</div>
<div class="c" style="left:699.4px;top:219.32px;width:52.85000000000002px;padding-left:2.8px">OB</div>
<div class="c" style="left:752.25px;top:219.32px;width:89.35000000000002px;padding-right:6.2px;text-align:right">5.615.000</div>
<div class="c" style="left:841.6px;top:219.32px;width:82.39999999999998px;padding-right:5.0px;text-align:right">134.760.000</div>
<div class="c" style="left:924px;top:219.32px;width:82.25px;padding-right:4.5px;text-align:right">134.760.000</div>
<div class="c" style="left:1006.25px;top:219.32px;width:72.75px;padding-right:5.5px;text-align:right">-</div>
<div class="c" style="left:1079px;top:219.32px;width:83.5px;padding-right:5.1px;text-align:right">78.610.000</div>
<div class="c" style="left:1162.5px;top:219.32px;width:94.0px;padding-right:6.0px;text-align:right">56.150.000</div>
<div class="c" style="left:1256.5px;top:219.32px;width:99.09999999999991px;padding-left:2.8px">B09</div>
<div class="c" style="left:1355.6px;top:219.32px;width:145.4000000000001px;padding-right:3.7px;text-align:right">44.920.000</div>
<div class="c" style="left:1501px;top:219.32px;width:86.59999999999991px;padding-right:2.4px;text-align:right">44.920.000</div>
<div class="c" style="left:32.5px;top:236.0px;width:21.0px;padding-left:1.5px">7</div>
<div class="c" style="left:53.5px;top:236.0px;width:253.75px;padding-left:2.8px">Pengadilan Militer II - 08 Di Jakarta</div>
<div class="c" style="left:307.25px;top:236.0px;width:54.25px;padding-left:2.8px">0100</div>
<div class="c" style="left:361.5px;top:236.0px;width:52.89999999999998px;padding-right:2.5px;text-align:right">2025</div>
<div class="c" style="left:414.4px;top:236.0px;width:53.60000000000002px;padding-left:2.8px">521111</div>
<div class="c" style="left:468px;top:236.0px;width:177.60000000000002px;padding-left:2.8px">SATPAM</div>
<div class="c" style="left:645.6px;top:236.0px;width:53.799999999999955px;padding-right:2.5px;text-align:right">48</div>
<div class="c" style="left:699.4px;top:236.0px;width:52.85000000000002px;padding-left:2.8px">OB</div>
<div class="c" style="left:752.25px;top:236.0px;width:89.35000000000002px;padding-right:6.2px;text-align:right">5.615.000</div>
<div class="c" style="left:841.6px;top:236.0px;width:82.39999999999998px;padding-right:5.0px;text-align:right">269.520.000</div>
<div class="c" style="left:924px;top:236.0px;width:82.25px;padding-right:4.5px;text-align:right">269.520.000</div>
<div class="c" style="left:1006.25px;top:236.0px;width:72.75px;padding-right:5.5px;text-align:right">-</div>
<div class="c" style="left:1079px;top:236.0px;width:83.5px;padding-right:5.1px;text-align:right">157.220.000</div>
<div class="c" style="left:1162.5px;top:236.0px;width:94.0px;padding-right:6.0px;text-align:right">112.300.000</div>
<div class="c" style="left:1256.5px;top:236.0px;width:99.09999999999991px;padding-left:2.8px">B09</div>
<div class="c" style="left:1355.6px;top:236.0px;width:145.4000000000001px;padding-right:3.7px;text-align:right">89.840.000</div>
<div class="c" style="left:1501px;top:236.0px;width:86.59999999999991px;padding-right:2.4px;text-align:right">89.840.000</div>
<div class="c" style="left:32.5px;top:252.68px;width:21.0px;padding-left:1.5px">0</div>
<div class="c" style="left:53.5px;top:252.68px;width:253.75px;padding-left:2.8px">Pengadilan Tinggi Bandung</div>
<div class="c" style="left:307.25px;top:252.68px;width:54.25px;padding-left:2.8px">0200</div>
<div class="c" style="left:361.5px;top:252.68px;width:52.89999999999998px;padding-right:2.5px;text-align:right">2025</div>
<div class="c" style="left:414.4px;top:252.68px;width:53.60000000000002px;padding-left:2.8px">521111</div>
<div class="c" style="left:468px;top:252.68px;width:177.60000000000002px;padding-left:2.8px">Jasa Keamanan</div>
<div class="c" style="left:645.6px;top:252.68px;width:53.799999999999955px;padding-right:2.5px;text-align:right">1</div>
<div class="c" style="left:699.4px;top:252.68px;width:52.85000000000002px;padding-left:2.8px">THN</div>
<div class="c" style="left:752.25px;top:252.68px;width:89.35000000000002px;padding-right:6.2px;text-align:right">97.000.000</div>
<div class="c" style="left:841.6px;top:252.68px;width:82.39999999999998px;padding-right:5.0px;text-align:right">97.000.000</div>
<div class="c" style="left:924px;top:252.68px;width:82.25px;padding-right:4.5px;text-align:right">97.000.000</div>
<div class="c" style="left:1006.25px;top:252.68px;width:72.75px;padding-right:5.5px;text-align:right">-</div>
<div class="c" style="left:1079px;top:252.68px;width:83.5px;padding-right:5.1px;text-align:right">48.500.000</div>
<div class="c" style="left:1162.5px;top:252.68px;width:94.0px;padding-right:6.0px;text-align:right">48.500.000</div>
<div class="c" style="left:1256.5px;top:252.68px;width:99.09999999999991px;padding-left:2.8px">B10</div>
<div class="c" style="left:1355.6px;top:252.68px;width:145.4000000000001px;padding-right:3.7px;text-align:right">38.800.000</div>
<div class="c" style="left:1501px;top:252.68px;width:86.59999999999991px;padding-right:2.4px;text-align:right">0</div>
<div class="c" style="left:32.5px;top:269.36px;width:21.0px;padding-left:1.5px">0</div>
<div class="c" style="left:53.5px;top:269.36px;width:253.75px;padding-left:2.8px">Pengadilan Tinggi Bandung</div>
<div class="c" style="left:307.25px;top:269.36px;width:54.25px;padding-left:2.8px">0200</div>
<div class="c" style="left:361.5px;top:269.36px;width:52.89999999999998px;padding-right:2.5px;text-align:right">2025</div>
<div class="c" style="left:414.4px;top:269.36px;width:53.60000000000002px;padding-left:2.8px">521111</div>
<div class="c" style="left:468px;top:269.36px;width:177.60000000000002px;padding-left:2.8px">Satpam</div>
<div class="c" style="left:645.6px;top:269.36px;width:53.799999999999955px;padding-right:2.5px;text-align:right">48</div>
<div class="c" style="left:699.4px;top:269.36px;width:52.85000000000002px;padding-left:2.8px">OB</div>
<div class="c" style="left:752.25px;top:269.36px;width:89.35000000000002px;padding-right:6.2px;text-align:right">3.777.000</div>
<div class="c" style="left:841.6px;top:269.36px;width:82.39999999999998px;padding-right:5.0px;text-align:right">181.296.000</div>
<div class="c" style="left:924px;top:269.36px;width:82.25px;padding-right:4.5px;text-align:right">181.296.000</div>
<div class="c" style="left:1006.25px;top:269.36px;width:72.75px;padding-right:5.5px;text-align:right">-</div>
<div class="c" style="left:1079px;top:269.36px;width:83.5px;padding-right:5.1px;text-align:right">105.472.725</div>
<div class="c" style="left:1162.5px;top:269.36px;width:94.0px;padding-right:6.0px;text-align:right">75.823.275</div>
<div class="c" style="left:1256.5px;top:269.36px;width:99.09999999999991px;padding-left:2.8px">B10</div>
<div class="c" style="left:1355.6px;top:269.36px;width:145.4000000000001px;padding-right:3.7px;text-align:right">60.658.620</div>
<div class="c" style="left:1501px;top:269.36px;width:86.59999999999991px;padding-right:2.4px;text-align:right">60.658.620</div>
<div class="c" style="left:32.5px;top:286.04px;width:21.0px;padding-left:1.5px">0</div>
<div class="c" style="left:53.5px;top:286.04px;width:253.75px;padding-left:2.8px">Pengadilan Tinggi Bandung</div>
<div class="c" style="left:307.25px;top:286.04px;width:54.25px;padding-left:2.8px">0200</div>
<div class="c" style="left:361.5px;top:286.04px;width:52.89999999999998px;padding-right:2.5px;text-align:right">2025</div>
<div class="c" style="left:414.4px;top:286.04px;width:53.60000000000002px;padding-left:2.8px">521111</div>
<div class="c" style="left:468px;top:286.04px;width:177.60000000000002px;padding-left:2.8px">Pramubakti</div>
<div class="c" style="left:645.6px;top:286.04px;width:53.799999999999955px;padding-right:2.5px;text-align:right">156</div>
<div class="c" style="left:699.4px;top:286.04px;width:52.85000000000002px;padding-left:2.8px">OB</div>
<div class="c" style="left:752.25px;top:286.04px;width:89.35000000000002px;padding-right:6.2px;text-align:right">3.433.000</div>
<div class="c" style="left:841.6px;top:286.04px;width:82.39999999999998px;padding-right:5.0px;text-align:right">535.548.000</div>
<div class="c" style="left:924px;top:286.04px;width:82.25px;padding-right:4.5px;text-align:right">535.548.000</div>
<div class="c" style="left:1006.25px;top:286.04px;width:72.75px;padding-right:5.5px;text-align:right">-</div>
<div class="c" style="left:1079px;top:286.04px;width:83.5px;padding-right:5.1px;text-align:right">287.565.245</div>
<div class="c" style="left:1162.5px;top:286.04px;width:94.0px;padding-right:6.0px;text-align:right">247.982.755</div>
<div class="c" style="left:1256.5px;top:286.04px;width:99.09999999999991px;padding-left:2.8px">B10</div>
<div class="c" style="left:1355.6px;top:286.04px;width:145.4000000000001px;padding-right:3.7px;text-align:right">198.386.204</div>
<div class="c" style="left:1501px;top:286.04px;width:86.59999999999991px;padding-right:2.4px;text-align:right">198.386.204</div>
<div class="c" style="left:32.5px;top:302.72px;width:21.0px;padding-left:1.5px">0</div>
<div class="c" style="left:53.5px;top:302.72px;width:253.75px;padding-left:2.8px">Pengadilan Tinggi Bandung</div>
<div class="c" style="left:307.25px;top:302.72px;width:54.25px;padding-left:2.8px">0200</div>
<div class="c" style="left:361.5px;top:302.72px;width:52.89999999999998px;padding-right:2.5px;text-align:right">2025</div>
<div class="c" style="left:414.4px;top:302.72px;width:53.60000000000002px;padding-left:2.8px">521111</div>
<div class="c" style="left:468px;top:302.72px;width:177.60000000000002px;padding-left:2.8px">Pengemudi</div>
<div class="c" style="left:645.6px;top:302.72px;width:53.799999999999955px;padding-right:2.5px;text-align:right">48</div>
<div class="c" style="left:699.4px;top:302.72px;width:52.85000000000002px;padding-left:2.8px">OB</div>
<div class="c" style="left:752.25px;top:302.72px;width:89.35000000000002px;padding-right:6.2px;text-align:right">3.777.000</div>
<div class="c" style="left:841.6px;top:302.72px;width:82.39999999999998px;padding-right:5.0px;text-align:right">181.296.000</div>
<div class="c" style="left:924px;top:302.72px;width:82.25px;padding-right:4.5px;text-align:right">181.296.000</div>
<div class="c" style="left:1006.25px;top:302.72px;width:72.75px;padding-right:5.5px;text-align:right">-</div>
<div class="c" style="left:1079px;top:302.72px;width:83.5px;padding-right:5.1px;text-align:right">78.750.450</div>
<div class="c" style="left:1162.5px;top:302.72px;width:94.0px;padding-right:6.0px;text-align:right">102.545.550</div>
<div class="c" style="left:1256.5px;top:302.72px;width:99.09999999999991px;padding-left:2.8px">B10</div>
<div class="c" style="left:1355.6px;top:302.72px;width:145.4000000000001px;padding-right:3.7px;text-align:right">82.036.440</div>
<div class="c" style="left:1501px;top:302.72px;width:86.59999999999991px;padding-right:2.4px;text-align:right">82.036.440</div>
<div class="c" style="left:32.5px;top:319.4px;width:21.0px;padding-left:1.5px">4</div>
<div class="c" style="left:53.5px;top:319.4px;width:253.75px;padding-left:2.8px">Pengadilan Negeri Bandung</div>
<div class="c" style="left:307.25px;top:319.4px;width:54.25px;padding-left:2.8px">0200</div>
<div class="c" style="left:361.5px;top:319.4px;width:52.89999999999998px;padding-right:2.5px;text-align:right">2025</div>
<div class="c" style="left:414.4px;top:319.4px;width:53.60000000000002px;padding-left:2.8px">521111</div>
<div class="c" style="left:468px;top:319.4px;width:177.60000000000002px;padding-left:2.8px">Pramubakti 10.0 ORG x 12.0 BLN</div>
<div class="c" style="left:645.6px;top:319.4px;width:53.799999999999955px;padding-right:2.5px;text-align:right">120</div>
<div class="c" style="left:699.4px;top:319.4px;width:52.85000000000002px;padding-left:2.8px">OB</div>
<div class="c" style="left:752.25px;top:319.4px;width:89.35000000000002px;padding-right:6.2px;text-align:right">3.433.000</div>
<div class="c" style="left:841.6px;top:319.4px;width:82.39999999999998px;padding-right:5.0px;text-align:right">411.960.000</div>
<div class="c" style="left:924px;top:319.4px;width:82.25px;padding-right:4.5px;text-align:right">411.960.000</div>
<div class="c" style="left:1006.25px;top:319.4px;width:72.75px;padding-right:5.5px;text-align:right">-</div>
<div class="c" style="left:1079px;top:319.4px;width:83.5px;padding-right:5.1px;text-align:right">240.310.000</div>
<div class="c" style="left:1162.5px;top:319.4px;width:94.0px;padding-right:6.0px;text-align:right">171.650.000</div>
<div class="c" style="left:1256.5px;top:319.4px;width:99.09999999999991px;padding-left:2.8px">B07</div>
<div class="c" style="left:1355.6px;top:319.4px;width:145.4000000000001px;padding-right:3.7px;text-align:right">137.320.000</div>
<div class="c" style="left:1501px;top:319.4px;width:86.59999999999991px;padding-right:2.4px;text-align:right">137.320.000</div>
<div class="c" style="left:32.5px;top:336.08px;width:21.0px;padding-left:1.5px">4</div>
<div class="c" style="left:53.5px;top:336.08px;width:253.75px;padding-left:2.8px">Pengadilan Negeri Bandung</div>
<div class="c" style="left:307.25px;top:336.08px;width:54.25px;padding-left:2.8px">0200</div>
<div class="c" style="left:361.5px;top:336.08px;width:52.89999999999998px;padding-right:2.5px;text-align:right">2025</div>
<div class="c" style="left:414.4px;top:336.08px;width:53.60000000000002px;padding-left:2.8px">521111</div>
<div class="c" style="left:468px;top:336.08px;width:177.60000000000002px;padding-left:2.8px">Pengemudi</div>
<div class="c" style="left:645.6px;top:336.08px;width:53.799999999999955px;padding-right:2.5px;text-align:right">48</div>
<div class="c" style="left:699.4px;top:336.08px;width:52.85000000000002px;padding-left:2.8px">OB</div>
<div class="c" style="left:752.25px;top:336.08px;width:89.35000000000002px;padding-right:6.2px;text-align:right">3.777.000</div>
<div class="c" style="left:841.6px;top:336.08px;width:82.39999999999998px;padding-right:5.0px;text-align:right">181.296.000</div>
<div class="c" style="left:924px;top:336.08px;width:82.25px;padding-right:4.5px;text-align:right">181.296.000</div>
<div class="c" style="left:1006.25px;top:336.08px;width:72.75px;padding-right:5.5px;text-align:right">-</div>
<div class="c" style="left:1079px;top:336.08px;width:83.5px;padding-right:5.1px;text-align:right">105.756.000</div>
<div class="c" style="left:1162.5px;top:336.08px;width:94.0px;padding-right:6.0px;text-align:right">75.540.000</div>
<div class="c" style="left:1256.5px;top:336.08px;width:99.09999999999991px;padding-left:2.8px">B07</div>
<div class="c" style="left:1355.6px;top:336.08px;width:145.4000000000001px;padding-right:3.7px;text-align:right">60.432.000</div>
<div class="c" style="left:1501px;top:336.08px;width:86.59999999999991px;padding-right:2.4px;text-align:right">60.432.000</div>
<div class="c" style="left:32.5px;top:352.76px;width:21.0px;padding-left:1.5px">4</div>
<div class="c" style="left:53.5px;top:352.76px;width:253.75px;padding-left:2.8px">Pengadilan Negeri Bandung</div>
<div class="c" style="left:307.25px;top:352.76px;width:54.25px;padding-left:2.8px">0200</div>
<div class="c" style="left:361.5px;top:352.76px;width:52.89999999999998px;padding-right:2.5px;text-align:right">2025</div>
<div class="c" style="left:414.4px;top:352.76px;width:53.60000000000002px;padding-left:2.8px">521111</div>
<div class="c" style="left:468px;top:352.76px;width:177.60000000000002px;padding-left:2.8px">Satpam</div>
<div class="c" style="left:645.6px;top:352.76px;width:53.799999999999955px;padding-right:2.5px;text-align:right">120</div>
<div class="c" style="left:699.4px;top:352.76px;width:52.85000000000002px;padding-left:2.8px">OB</div>
<div class="c" style="left:752.25px;top:352.76px;width:89.35000000000002px;padding-right:6.2px;text-align:right">3.777.000</div>
<div class="c" style="left:841.6px;top:352.76px;width:82.39999999999998px;padding-right:5.0px;text-align:right">453.240.000</div>
<div class="c" style="left:924px;top:352.76px;width:82.25px;padding-right:4.5px;text-align:right">453.240.000</div>
<div class="c" style="left:1006.25px;top:352.76px;width:72.75px;padding-right:5.5px;text-align:right">-</div>
<div class="c" style="left:1079px;top:352.76px;width:83.5px;padding-right:5.1px;text-align:right">264.390.000</div>
<div class="c" style="left:1162.5px;top:352.76px;width:94.0px;padding-right:6.0px;text-align:right">188.850.000</div>
<div class="c" style="left:1256.5px;top:352.76px;width:99.09999999999991px;padding-left:2.8px">B07</div>
<div class="c" style="left:1355.6px;top:352.76px;width:145.4000000000001px;padding-right:3.7px;text-align:right">151.080.000</div>
<div class="c" style="left:1501px;top:352.76px;width:86.59999999999991px;padding-right:2.4px;text-align:right">151.080.000</div>
<div class="c" style="left:32.5px;top:369.44px;width:21.0px;padding-left:1.5px">1</div>
<div class="c" style="left:53.5px;top:369.44px;width:253.75px;padding-left:2.8px">Pengadilan Negeri Sumedang</div>
<div class="c" style="left:307.25px;top:369.44px;width:54.25px;padding-left:2.8px">0200</div>
<div class="c" style="left:361.5px;top:369.44px;width:52.89999999999998px;padding-right:2.5px;text-align:right">2025</div>
<div class="c" style="left:414.4px;top:369.44px;width:53.60000000000002px;padding-left:2.8px">521111</div>
<div class="c" style="left:468px;top:369.44px;width:177.60000000000002px;padding-left:2.8px">Satpam</div>
<div class="c" style="left:645.6px;top:369.44px;width:53.799999999999955px;padding-right:2.5px;text-align:right">48</div>
<div class="c" style="left:699.4px;top:369.44px;width:52.85000000000002px;padding-left:2.8px">OB</div>
<div class="c" style="left:752.25px;top:369.44px;width:89.35000000000002px;padding-right:6.2px;text-align:right">3.777.000</div>
<div class="c" style="left:841.6px;top:369.44px;width:82.39999999999998px;padding-right:5.0px;text-align:right">181.296.000</div>
<div class="c" style="left:924px;top:369.44px;width:82.25px;padding-right:4.5px;text-align:right">181.296.000</div>
<div class="c" style="left:1006.25px;top:369.44px;width:72.75px;padding-right:5.5px;text-align:right">-</div>
<div class="c" style="left:1079px;top:369.44px;width:83.5px;padding-right:5.1px;text-align:right">105.756.000</div>
<div class="c" style="left:1162.5px;top:369.44px;width:94.0px;padding-right:6.0px;text-align:right">75.540.000</div>
<div class="c" style="left:1256.5px;top:369.44px;width:99.09999999999991px;padding-left:2.8px">B07</div>
<div class="c" style="left:1355.6px;top:369.44px;width:145.4000000000001px;padding-right:3.7px;text-align:right">60.432.000</div>
<div class="c" style="left:1501px;top:369.44px;width:86.59999999999991px;padding-right:2.4px;text-align:right">60.432.000</div>
<div class="c" style="left:32.5px;top:386.12px;width:21.0px;padding-left:1.5px">1</div>
<div class="c" style="left:53.5px;top:386.12px;width:253.75px;padding-left:2.8px">Pengadilan Negeri Sumedang</div>
<div class="c" style="left:307.25px;top:386.12px;width:54.25px;padding-left:2.8px">0200</div>
<div class="c" style="left:361.5px;top:386.12px;width:52.89999999999998px;padding-right:2.5px;text-align:right">2025</div>
<div class="c" style="left:414.4px;top:386.12px;width:53.60000000000002px;padding-left:2.8px">521111</div>
<div class="c" style="left:468px;top:386.12px;width:177.60000000000002px;padding-left:2.8px">Pramubakti</div>
<div class="c" style="left:645.6px;top:386.12px;width:53.799999999999955px;padding-right:2.5px;text-align:right">36</div>
<div class="c" style="left:699.4px;top:386.12px;width:52.85000000000002px;padding-left:2.8px">OB</div>
<div class="c" style="left:752.25px;top:386.12px;width:89.35000000000002px;padding-right:6.2px;text-align:right">3.433.000</div>
<div class="c" style="left:841.6px;top:386.12px;width:82.39999999999998px;padding-right:5.0px;text-align:right">123.588.000</div>
<div class="c" style="left:924px;top:386.12px;width:82.25px;padding-right:4.5px;text-align:right">123.588.000</div>
<div class="c" style="left:1006.25px;top:386.12px;width:72.75px;padding-right:5.5px;text-align:right">-</div>
<div class="c" style="left:1079px;top:386.12px;width:83.5px;padding-right:5.1px;text-align:right">72.093.000</div>
<div class="c" style="left:1162.5px;top:386.12px;width:94.0px;padding-right:6.0px;text-align:right">51.495.000</div>
<div class="c" style="left:1256.5px;top:386.12px;width:99.09999999999991px;padding-left:2.8px">B07</div>
<div class="c" style="left:1355.6px;top:386.12px;width:145.4000000000001px;padding-right:3.7px;text-align:right">41.196.000</div>
<div class="c" style="left:1501px;top:386.12px;width:86.59999999999991px;padding-right:2.4px;text-align:right">41.196.000</div>
<div class="c" style="left:32.5px;top:402.8px;width:21.0px;padding-left:1.5px">1</div>
<div class="c" style="left:53.5px;top:402.8px;width:253.75px;padding-left:2.8px">Pengadilan Negeri Sumedang</div>
<div class="c" style="left:307.25px;top:402.8px;width:54.25px;padding-left:2.8px">0200</div>
<div class="c" style="left:361.5px;top:402.8px;width:52.89999999999998px;padding-right:2.5px;text-align:right">2025</div>
<div class="c" style="left:414.4px;top:402.8px;width:53.60000000000002px;padding-left:2.8px">521111</div>
<div class="c" style="left:468px;top:402.8px;width:177.60000000000002px;padding-left:2.8px">Pengemudi</div>
<div class="c" style="left:645.6px;top:402.8px;width:53.799999999999955px;padding-right:2.5px;text-align:right">24</div>
<div class="c" style="left:699.4px;top:402.8px;width:52.85000000000002px;padding-left:2.8px">OB</div>
<div class="c" style="left:752.25px;top:402.8px;width:89.35000000000002px;padding-right:6.2px;text-align:right">3.777.000</div>
<div class="c" style="left:841.6px;top:402.8px;width:82.39999999999998px;padding-right:5.0px;text-align:right">90.648.000</div>
<div class="c" style="left:924px;top:402.8px;width:82.25px;padding-right:4.5px;text-align:right">90.648.000</div>
<div class="c" style="left:1006.25px;top:402.8px;width:72.75px;padding-right:5.5px;text-align:right">-</div>
<div class="c" style="left:1079px;top:402.8px;width:83.5px;padding-right:5.1px;text-align:right">52.878.000</div>
<div class="c" style="left:1162.5px;top:402.8px;width:94.0px;padding-right:6.0px;text-align:right">37.770.000</div>
<div class="c" style="left:1256.5px;top:402.8px;width:99.09999999999991px;padding-left:2.8px">B07</div>
<div class="c" style="left:1355.6px;top:402.8px;width:145.4000000000001px;padding-right:3.7px;text-align:right">30.216.000</div>
<div class="c" style="left:1501px;top:402.8px;width:86.59999999999991px;padding-right:2.4px;text-align:right">30.216.000</div>
<div class="c" style="left:32.5px;top:419.48px;width:21.0px;padding-left:1.5px">5</div>
<div class="c" style="left:53.5px;top:419.48px;width:253.75px;padding-left:2.8px">Pengadilan Negeri Tasikmalaya</div>
<div class="c" style="left:307.25px;top:419.48px;width:54.25px;padding-left:2.8px">0200</div>
<div class="c" style="left:361.5px;top:419.48px;width:52.89999999999998px;padding-right:2.5px;text-align:right">2025</div>
<div class="c" style="left:414.4px;top:419.48px;width:53.60000000000002px;padding-left:2.8px">521111</div>
<div class="c" style="left:468px;top:419.48px;width:177.60000000000002px;padding-left:2.8px">SATPAM</div>
<div class="c" style="left:645.6px;top:419.48px;width:53.799999999999955px;padding-right:2.5px;text-align:right">48</div>
<div class="c" style="left:699.4px;top:419.48px;width:52.85000000000002px;padding-left:2.8px">OB</div>
<div class="c" style="left:752.25px;top:419.48px;width:89.35000000000002px;padding-right:6.2px;text-align:right">3.777.000</div>
<div class="c" style="left:841.6px;top:419.48px;width:82.39999999999998px;padding-right:5.0px;text-align:right">181.296.000</div>
<div class="c" style="left:924px;top:419.48px;width:82.25px;padding-right:4.5px;text-align:right">181.296.000</div>
<div class="c" style="left:1006.25px;top:419.48px;width:72.75px;padding-right:5.5px;text-align:right">-</div>
<div class="c" style="left:1079px;top:419.48px;width:83.5px;padding-right:5.1px;text-align:right">105.756.000</div>
<div class="c" style="left:1162.5px;top:419.48px;width:94.0px;padding-right:6.0px;text-align:right">75.540.000</div>
<div class="c" style="left:1256.5px;top:419.48px;width:99.09999999999991px;padding-left:2.8px">B05</div>
<div class="c" style="left:1355.6px;top:419.48px;width:145.4000000000001px;padding-right:3.7px;text-align:right">60.432.000</div>
<div class="c" style="left:1501px;top:419.48px;width:86.59999999999991px;padding-right:2.4px;text-align:right">45.324.000</div>
<div class="c" style="left:32.5px;top:436.16px;width:21.0px;padding-left:1.5px">5</div>
<div class="c" style="left:53.5px;top:436.16px;width:253.75px;padding-left:2.8px">Pengadilan Negeri Tasikmalaya</div>
<div class="c" style="left:307.25px;top:436.16px;width:54.25px;padding-left:2.8px">0200</div>
<div class="c" style="left:361.5px;top:436.16px;width:52.89999999999998px;padding-right:2.5px;text-align:right">2025</div>
<div class="c" style="left:414.4px;top:436.16px;width:53.60000000000002px;padding-left:2.8px">521111</div>
<div class="c" style="left:468px;top:436.16px;width:177.60000000000002px;padding-left:2.8px">PENGEMUDI</div>
<div class="c" style="left:645.6px;top:436.16px;width:53.799999999999955px;padding-right:2.5px;text-align:right">12</div>
<div class="c" style="left:699.4px;top:436.16px;width:52.85000000000002px;padding-left:2.8px">OB</div>
<div class="c" style="left:752.25px;top:436.16px;width:89.35000000000002px;padding-right:6.2px;text-align:right">3.777.000</div>
<div class="c" style="left:841.6px;top:436.16px;width:82.39999999999998px;padding-right:5.0px;text-align:right">45.324.000</div>
<div class="c" style="left:924px;top:436.16px;width:82.25px;padding-right:4.5px;text-align:right">45.324.000</div>
<div class="c" style="left:1006.25px;top:436.16px;width:72.75px;padding-right:5.5px;text-align:right">-</div>
<div class="c" style="left:1079px;top:436.16px;width:83.5px;padding-right:5.1px;text-align:right">26.439.000</div>
<div class="c" style="left:1162.5px;top:436.16px;width:94.0px;padding-right:6.0px;text-align:right">18.885.000</div>
<div class="c" style="left:1256.5px;top:436.16px;width:99.09999999999991px;padding-left:2.8px">B05</div>
<div class="c" style="left:1355.6px;top:436.16px;width:145.4000000000001px;padding-right:3.7px;text-align:right">15.108.000</div>
<div class="c" style="left:1501px;top:436.16px;width:86.59999999999991px;padding-right:2.4px;text-align:right">15.108.000</div>
<div class="c" style="left:32.5px;top:452.84px;width:21.0px;padding-left:1.5px">5</div>
<div class="c" style="left:53.5px;top:452.84px;width:253.75px;padding-left:2.8px">Pengadilan Negeri Tasikmalaya</div>
<div class="c" style="left:307.25px;top:452.84px;width:54.25px;padding-left:2.8px">0200</div>
<div class="c" style="left:361.5px;top:452.84px;width:52.89999999999998px;padding-right:2.5px;text-align:right">2025</div>
<div class="c" style="left:414.4px;top:452.84px;width:53.60000000000002px;padding-left:2.8px">521111</div>
<div class="c" style="left:468px;top:452.84px;width:177.60000000000002px;padding-left:2.8px">PRAMUBAKTI</div>
<div class="c" style="left:645.6px;top:452.84px;width:53.799999999999955px;padding-right:2.5px;text-align:right">60</div>
<div class="c" style="left:699.4px;top:452.84px;width:52.85000000000002px;padding-left:2.8px">OB</div>
<div class="c" style="left:752.25px;top:452.84px;width:89.35000000000002px;padding-right:6.2px;text-align:right">3.433.000</div>
<div class="c" style="left:841.6px;top:452.84px;width:82.39999999999998px;padding-right:5.0px;text-align:right">205.980.000</div>
<div class="c" style="left:924px;top:452.84px;width:82.25px;padding-right:4.5px;text-align:right">205.980.000</div>
<div class="c" style="left:1006.25px;top:452.84px;width:72.75px;padding-right:5.5px;text-align:right">-</div>
<div class="c" style="left:1079px;top:452.84px;width:83.5px;padding-right:5.1px;text-align:right">120.155.000</div>
<div class="c" style="left:1162.5px;top:452.84px;width:94.0px;padding-right:6.0px;text-align:right">85.825.000</div>
<div class="c" style="left:1256.5px;top:452.84px;width:99.09999999999991px;padding-left:2.8px">B05</div>
<div class="c" style="left:1355.6px;top:452.84px;width:145.4000000000001px;padding-right:3.7px;text-align:right">68.660.000</div>
<div class="c" style="left:1501px;top:452.84px;width:86.59999999999991px;padding-right:2.4px;text-align:right">68.660.000</div>
<div class="c" style="left:32.5px;top:469.52px;width:21.0px;padding-left:1.5px">2</div>
<div class="c" style="left:53.5px;top:469.52px;width:253.75px;padding-left:2.8px">Pengadilan Negeri Garut</div>
<div class="c" style="left:307.25px;top:469.52px;width:54.25px;padding-left:2.8px">0200</div>
<div class="c" style="left:361.5px;top:469.52px;width:52.89999999999998px;padding-right:2.5px;text-align:right">2025</div>
<div class="c" style="left:414.4px;top:469.52px;width:53.60000000000002px;padding-left:2.8px">521111</div>
<div class="c" style="left:468px;top:469.52px;width:177.60000000000002px;padding-left:2.8px">Pengemudi</div>
<div class="c" style="left:645.6px;top:469.52px;width:53.799999999999955px;padding-right:2.5px;text-align:right">24</div>
<div class="c" style="left:699.4px;top:469.52px;width:52.85000000000002px;padding-left:2.8px">OB</div>
<div class="c" style="left:752.25px;top:469.52px;width:89.35000000000002px;padding-right:6.2px;text-align:right">3.777.000</div>
<div class="c" style="left:841.6px;top:469.52px;width:82.39999999999998px;padding-right:5.0px;text-align:right">90.648.000</div>
<div class="c" style="left:924px;top:469.52px;width:82.25px;padding-right:4.5px;text-align:right">90.648.000</div>
<div class="c" style="left:1006.25px;top:469.52px;width:72.75px;padding-right:5.5px;text-align:right">-</div>
<div class="c" style="left:1079px;top:469.52px;width:83.5px;padding-right:5.1px;text-align:right">52.878.000</div>
<div class="c" style="left:1162.5px;top:469.52px;width:94.0px;padding-right:6.0px;text-align:right">37.770.000</div>
<div class="c" style="left:1256.5px;top:469.52px;width:99.09999999999991px;padding-left:2.8px">B07</div>
<div class="c" style="left:1355.6px;top:469.52px;width:145.4000000000001px;padding-right:3.7px;text-align:right">30.216.000</div>
<div class="c" style="left:32.5px;top:486.2px;width:21.0px;padding-left:1.5px">2</div>
<div class="c" style="left:53.5px;top:486.2px;width:253.75px;padding-left:2.8px">Pengadilan Negeri Garut</div>
<div class="c" style="left:307.25px;top:486.2px;width:54.25px;padding-left:2.8px">0200</div>
<div class="c" style="left:361.5px;top:486.2px;width:52.89999999999998px;padding-right:2.5px;text-align:right">2025</div>
<div class="c" style="left:414.4px;top:486.2px;width:53.60000000000002px;padding-left:2.8px">521111</div>
<div class="c" style="left:468px;top:486.2px;width:177.60000000000002px;padding-left:2.8px">Satpam ( Gaji ke 14)</div>
<div class="c" style="left:645.6px;top:486.2px;width:53.799999999999955px;padding-right:2.5px;text-align:right">3</div>
<div class="c" style="left:699.4px;top:486.2px;width:52.85000000000002px;padding-left:2.8px">OB</div>
<div class="c" style="left:752.25px;top:486.2px;width:89.35000000000002px;padding-right:6.2px;text-align:right">3.777.000</div>
<div class="c" style="left:841.6px;top:486.2px;width:82.39999999999998px;padding-right:5.0px;text-align:right">11.331.000</div>
<div class="c" style="left:924px;top:486.2px;width:82.25px;padding-right:4.5px;text-align:right">11.331.000</div>
<div class="c" style="left:1006.25px;top:486.2px;width:72.75px;padding-right:5.5px;text-align:right">-</div>
<div class="c" style="left:1079px;top:486.2px;width:83.5px;padding-right:5.1px;text-align:right">11.331.000</div>
<div class="c" style="left:1162.5px;top:486.2px;width:94.0px;padding-right:5.5px;text-align:right">-</div>
<div class="c" style="left:1256.5px;top:486.2px;width:99.09999999999991px;padding-left:2.8px">B07</div>
<div class="c" style="left:1355.6px;top:486.2px;width:145.4000000000001px;padding-right:3.8px;text-align:right">-</div>
<div class="c" style="left:32.5px;top:502.88px;width:21.0px;padding-left:1.5px">2</div>
<div class="c" style="left:53.5px;top:502.88px;width:253.75px;padding-left:2.8px">Pengadilan Negeri Garut</div>
<div class="c" style="left:307.25px;top:502.88px;width:54.25px;padding-left:2.8px">0200</div>
<div class="c" style="left:361.5px;top:502.88px;width:52.89999999999998px;padding-right:2.5px;text-align:right">2025</div>
<div class="c" style="left:414.4px;top:502.88px;width:53.60000000000002px;padding-left:2.8px">521111</div>
<div class="c" style="left:468px;top:502.88px;width:177.60000000000002px;padding-left:2.8px">Satpam</div>
<div class="c" style="left:645.6px;top:502.88px;width:53.799999999999955px;padding-right:2.5px;text-align:right">36</div>
<div class="c" style="left:699.4px;top:502.88px;width:52.85000000000002px;padding-left:2.8px">OB</div>
<div class="c" style="left:752.25px;top:502.88px;width:89.35000000000002px;padding-right:6.2px;text-align:right">3.777.000</div>
<div class="c" style="left:841.6px;top:502.88px;width:82.39999999999998px;padding-right:5.0px;text-align:right">135.972.000</div>
<div class="c" style="left:924px;top:502.88px;width:82.25px;padding-right:4.5px;text-align:right">135.972.000</div>
<div class="c" style="left:1006.25px;top:502.88px;width:72.75px;padding-right:5.5px;text-align:right">-</div>
<div class="c" style="left:1079px;top:502.88px;width:83.5px;padding-right:5.1px;text-align:right">79.317.000</div>
<div class="c" style="left:1162.5px;top:502.88px;width:94.0px;padding-right:6.0px;text-align:right">56.655.000</div>
<div class="c" style="left:1256.5px;top:502.88px;width:99.09999999999991px;padding-left:2.8px">B07</div>
<div class="c" style="left:1355.6px;top:502.88px;width:145.4000000000001px;padding-right:3.7px;text-align:right">45.324.000</div>
<div class="c" style="left:32.5px;top:519.56px;width:21.0px;padding-left:1.5px">2</div>
<div class="c" style="left:53.5px;top:519.56px;width:253.75px;padding-left:2.8px">Pengadilan Negeri Garut</div>
<div class="c" style="left:307.25px;top:519.56px;width:54.25px;padding-left:2.8px">0200</div>
<div class="c" style="left:361.5px;top:519.56px;width:52.89999999999998px;padding-right:2.5px;text-align:right">2025</div>
<div class="c" style="left:414.4px;top:519.56px;width:53.60000000000002px;padding-left:2.8px">521111</div>
<div class="c" style="left:468px;top:519.56px;width:177.60000000000002px;padding-left:2.8px">Pramubakti</div>
<div class="c" style="left:645.6px;top:519.56px;width:53.799999999999955px;padding-right:2.5px;text-align:right">48</div>
<div class="c" style="left:699.4px;top:519.56px;width:52.85000000000002px;padding-left:2.8px">OB</div>
<div class="c" style="left:752.25px;top:519.56px;width:89.35000000000002px;padding-right:6.2px;text-align:right">3.433.000</div>
<div class="c" style="left:841.6px;top:519.56px;width:82.39999999999998px;padding-right:5.0px;text-align:right">164.784.000</div>
<div class="c" style="left:924px;top:519.56px;width:82.25px;padding-right:4.5px;text-align:right">164.784.000</div>
<div class="c" style="left:1006.25px;top:519.56px;width:72.75px;padding-right:5.5px;text-align:right">-</div>
<div class="c" style="left:1079px;top:519.56px;width:83.5px;padding-right:5.1px;text-align:right">96.124.000</div>
<div class="c" style="left:1162.5px;top:519.56px;width:94.0px;padding-right:6.0px;text-align:right">68.660.000</div>
<div class="c" style="left:1256.5px;top:519.56px;width:99.09999999999991px;padding-left:2.8px">B07</div>
<div class="c" style="left:1355.6px;top:519.56px;width:145.4000000000001px;padding-right:3.7px;text-align:right">54.928.000</div>
<div class="c" style="left:32.5px;top:536.24px;width:21.0px;padding-left:1.5px">2</div>
<div class="c" style="left:53.5px;top:536.24px;width:253.75px;padding-left:2.8px">Pengadilan Negeri Garut</div>
<div class="c" style="left:307.25px;top:536.24px;width:54.25px;padding-left:2.8px">0200</div>
<div class="c" style="left:361.5px;top:536.24px;width:52.89999999999998px;padding-right:2.5px;text-align:right">2025</div>
<div class="c" style="left:414.4px;top:536.24px;width:53.60000000000002px;padding-left:2.8px">521111</div>
<div class="c" style="left:468px;top:536.24px;width:177.60000000000002px;padding-left:2.8px">Pramubakti (Gaji ke 14)</div>
<div class="c" style="left:645.6px;top:536.24px;width:53.799999999999955px;padding-right:2.5px;text-align:right">4</div>
<div class="c" style="left:699.4px;top:536.24px;width:52.85000000000002px;padding-left:2.8px">OB</div>
<div class="c" style="left:752.25px;top:536.24px;width:89.35000000000002px;padding-right:6.2px;text-align:right">3.433.000</div>
<div class="c" style="left:841.6px;top:536.24px;width:82.39999999999998px;padding-right:5.0px;text-align:right">13.732.000</div>
<div class="c" style="left:924px;top:536.24px;width:82.25px;padding-right:4.5px;text-align:right">13.732.000</div>
<div class="c" style="left:1006.25px;top:536.24px;width:72.75px;padding-right:5.5px;text-align:right">-</div>
<div class="c" style="left:1079px;top:536.24px;width:83.5px;padding-right:5.1px;text-align:right">13.732.000</div>
<div class="c" style="left:1162.5px;top:536.24px;width:94.0px;padding-right:5.5px;text-align:right">-</div>
<div class="c" style="left:1256.5px;top:536.24px;width:99.09999999999991px;padding-left:2.8px">B07</div>
<div class="c" style="left:1355.6px;top:536.24px;width:145.4000000000001px;padding-right:3.8px;text-align:right">-</div>
<div class="c" style="left:32.5px;top:552.92px;width:21.0px;padding-left:1.5px">2</div>
<div class="c" style="left:53.5px;top:552.92px;width:253.75px;padding-left:2.8px">Pengadilan Negeri Garut</div>
<div class="c" style="left:307.25px;top:552.92px;width:54.25px;padding-left:2.8px">0200</div>
<div class="c" style="left:361.5px;top:552.92px;width:52.89999999999998px;padding-right:2.5px;text-align:right">2025</div>
<div class="c" style="left:414.4px;top:552.92px;width:53.60000000000002px;padding-left:2.8px">521111</div>
<div class="c" style="left:468px;top:552.92px;width:177.60000000000002px;padding-left:2.8px">Pengemudi (Gaji Ke 14)</div>
<div class="c" style="left:645.6px;top:552.92px;width:53.799999999999955px;padding-right:2.5px;text-align:right">2</div>
<div class="c" style="left:699.4px;top:552.92px;width:52.85000000000002px;padding-left:2.8px">OB</div>
<div class="c" style="left:752.25px;top:552.92px;width:89.35000000000002px;padding-right:6.2px;text-align:right">3.777.000</div>
<div class="c" style="left:841.6px;top:552.92px;width:82.39999999999998px;padding-right:5.0px;text-align:right">7.554.000</div>
<div class="c" style="left:924px;top:552.92px;width:82.25px;padding-right:4.5px;text-align:right">7.554.000</div>
<div class="c" style="left:1006.25px;top:552.92px;width:72.75px;padding-right:5.5px;text-align:right">-</div>
<div class="c" style="left:1079px;top:552.92px;width:83.5px;padding-right:5.1px;text-align:right">7.554.000</div>
<div class="c" style="left:1162.5px;top:552.92px;width:94.0px;padding-right:5.5px;text-align:right">-</div>
<div class="c" style="left:1256.5px;top:552.92px;width:99.09999999999991px;padding-left:2.8px">B07</div>
<div class="c" style="left:1355.6px;top:552.92px;width:145.4000000000001px;padding-right:3.8px;text-align:right">-</div>
<div class="c" style="left:32.5px;top:569.6px;width:21.0px;padding-left:1.5px">6</div>
<div class="c" style="left:53.5px;top:569.6px;width:253.75px;padding-left:2.8px">Pengadilan Negeri Ciamis</div>
<div class="c" style="left:307.25px;top:569.6px;width:54.25px;padding-left:2.8px">0200</div>
<div class="c" style="left:361.5px;top:569.6px;width:52.89999999999998px;padding-right:2.5px;text-align:right">2025</div>
<div class="c" style="left:414.4px;top:569.6px;width:53.60000000000002px;padding-left:2.8px">521111</div>
<div class="c" style="left:468px;top:569.6px;width:177.60000000000002px;padding-left:2.8px">Pramubakti</div>
<div class="c" style="left:645.6px;top:569.6px;width:53.799999999999955px;padding-right:2.5px;text-align:right">2</div>
<div class="c" style="left:699.4px;top:569.6px;width:52.85000000000002px;padding-left:2.8px">OB</div>
<div class="c" style="left:752.25px;top:569.6px;width:89.35000000000002px;padding-right:6.2px;text-align:right">1.000.000</div>
<div class="c" style="left:841.6px;top:569.6px;width:82.39999999999998px;padding-right:5.5px;text-align:right">-</div>
<div class="c" style="left:924px;top:569.6px;width:82.25px;padding-right:4.5px;text-align:right">2.000.000</div>
<div class="c" style="left:1006.25px;top:569.6px;width:72.75px;padding-right:5.5px;text-align:right">2.000.000</div>
<div class="c" style="left:1079px;top:569.6px;width:83.5px;padding-right:5.1px;text-align:right">2.000.000</div>
<div class="c" style="left:1162.5px;top:569.6px;width:94.0px;padding-right:5.5px;text-align:right">-</div>
<div class="c" style="left:1256.5px;top:569.6px;width:99.09999999999991px;padding-left:2.8px">B06</div>
<div class="c" style="left:1355.6px;top:569.6px;width:145.4000000000001px;padding-right:3.8px;text-align:right">-</div>
<div class="c" style="left:32.5px;top:586.28px;width:21.0px;padding-left:1.5px">6</div>
<div class="c" style="left:53.5px;top:586.28px;width:253.75px;padding-left:2.8px">Pengadilan Negeri Ciamis</div>
<div class="c" style="left:307.25px;top:586.28px;width:54.25px;padding-left:2.8px">0200</div>
<div class="c" style="left:361.5px;top:586.28px;width:52.89999999999998px;padding-right:2.5px;text-align:right">2025</div>
<div class="c" style="left:414.4px;top:586.28px;width:53.60000000000002px;padding-left:2.8px">521111</div>
<div class="c" style="left:468px;top:586.28px;width:177.60000000000002px;padding-left:2.8px">Pengemudi</div>
<div class="c" style="left:645.6px;top:586.28px;width:53.799999999999955px;padding-right:2.5px;text-align:right">24</div>
<div class="c" style="left:699.4px;top:586.28px;width:52.85000000000002px;padding-left:2.8px">OB</div>
<div class="c" style="left:752.25px;top:586.28px;width:89.35000000000002px;padding-right:6.2px;text-align:right">3.777.000</div>
<div class="c" style="left:841.6px;top:586.28px;width:82.39999999999998px;padding-right:5.0px;text-align:right">90.648.000</div>
<div class="c" style="left:924px;top:586.28px;width:82.25px;padding-right:4.5px;text-align:right">90.648.000</div>
<div class="c" style="left:1006.25px;top:586.28px;width:72.75px;padding-right:5.5px;text-align:right">-</div>
<div class="c" style="left:1079px;top:586.28px;width:83.5px;padding-right:5.1px;text-align:right">52.878.000</div>
<div class="c" style="left:1162.5px;top:586.28px;width:94.0px;padding-right:6.0px;text-align:right">37.770.000</div>
<div class="c" style="left:1256.5px;top:586.28px;width:99.09999999999991px;padding-left:2.8px">B06</div>
<div class="c" style="left:1355.6px;top:586.28px;width:145.4000000000001px;padding-right:3.7px;text-align:right">30.216.000</div>
<div class="c" style="left:32.5px;top:602.96px;width:21.0px;padding-left:1.5px">6</div>
<div class="c" style="left:53.5px;top:602.96px;width:253.75px;padding-left:2.8px">Pengadilan Negeri Ciamis</div>
<div class="c" style="left:307.25px;top:602.96px;width:54.25px;padding-left:2.8px">0200</div>
<div class="c" style="left:361.5px;top:602.96px;width:52.89999999999998px;padding-right:2.5px;text-align:right">2025</div>
<div class="c" style="left:414.4px;top:602.96px;width:53.60000000000002px;padding-left:2.8px">521111</div>
<div class="c" style="left:468px;top:602.96px;width:177.60000000000002px;padding-left:2.8px">Satpam</div>
<div class="c" style="left:645.6px;top:602.96px;width:53.799999999999955px;padding-right:2.5px;text-align:right">48</div>
<div class="c" style="left:699.4px;top:602.96px;width:52.85000000000002px;padding-left:2.8px">OB</div>
<div class="c" style="left:752.25px;top:602.96px;width:89.35000000000002px;padding-right:6.2px;text-align:right">3.777.000</div>
<div class="c" style="left:841.6px;top:602.96px;width:82.39999999999998px;padding-right:5.0px;text-align:right">181.296.000</div>
<div class="c" style="left:924px;top:602.96px;width:82.25px;padding-right:4.5px;text-align:right">181.296.000</div>
<div class="c" style="left:1006.25px;top:602.96px;width:72.75px;padding-right:5.5px;text-align:right">-</div>
<div class="c" style="left:1079px;top:602.96px;width:83.5px;padding-right:5.1px;text-align:right">105.756.000</div>
<div class="c" style="left:1162.5px;top:602.96px;width:94.0px;padding-right:6.0px;text-align:right">75.540.000</div>
<div class="c" style="left:1256.5px;top:602.96px;width:99.09999999999991px;padding-left:2.8px">B06</div>
<div class="c" style="left:1355.6px;top:602.96px;width:145.4000000000001px;padding-right:3.7px;text-align:right">60.432.000</div>
<div class="c" style="left:32.5px;top:619.64px;width:21.0px;padding-left:1.5px">6</div>
<div class="c" style="left:53.5px;top:619.64px;width:253.75px;padding-left:2.8px">Pengadilan Negeri Ciamis</div>
<div class="c" style="left:307.25px;top:619.64px;width:54.25px;padding-left:2.8px">0200</div>
<div class="c" style="left:361.5px;top:619.64px;width:52.89999999999998px;padding-right:2.5px;text-align:right">2025</div>
<div class="c" style="left:414.4px;top:619.64px;width:53.60000000000002px;padding-left:2.8px">521111</div>
<div class="c" style="left:468px;top:619.64px;width:177.60000000000002px;padding-left:2.8px">Pramubakti</div>
<div class="c" style="left:645.6px;top:619.64px;width:53.799999999999955px;padding-right:2.5px;text-align:right">48</div>
<div class="c" style="left:699.4px;top:619.64px;width:52.85000000000002px;padding-left:2.8px">OB</div>
<div class="c" style="left:752.25px;top:619.64px;width:89.35000000000002px;padding-right:6.2px;text-align:right">3.433.000</div>
<div class="c" style="left:841.6px;top:619.64px;width:82.39999999999998px;padding-right:5.0px;text-align:right">164.784.000</div>
<div class="c" style="left:924px;top:619.64px;width:82.25px;padding-right:4.5px;text-align:right">164.784.000</div>
<div class="c" style="left:1006.25px;top:619.64px;width:72.75px;padding-right:5.5px;text-align:right">-</div>
<div class="c" style="left:1079px;top:619.64px;width:83.5px;padding-right:5.1px;text-align:right">96.124.000</div>
<div class="c" style="left:1162.5px;top:619.64px;width:94.0px;padding-right:6.0px;text-align:right">68.660.000</div>
<div class="c" style="left:1256.5px;top:619.64px;width:99.09999999999991px;padding-left:2.8px">B06</div>
<div class="c" style="left:1355.6px;top:619.64px;width:145.4000000000001px;padding-right:3.7px;text-align:right">54.928.000</div>
<div class="c" style="left:32.5px;top:636.32px;width:21.0px;padding-left:1.5px">3</div>
<div class="c" style="left:53.5px;top:636.32px;width:253.75px;padding-left:2.8px">Pengadilan Negeri Purwakarta</div>
<div class="c" style="left:307.25px;top:636.32px;width:54.25px;padding-left:2.8px">0200</div>
<div class="c" style="left:361.5px;top:636.32px;width:52.89999999999998px;padding-right:2.5px;text-align:right">2025</div>
<div class="c" style="left:414.4px;top:636.32px;width:53.60000000000002px;padding-left:2.8px">521111</div>
<div class="c" style="left:468px;top:636.32px;width:177.60000000000002px;padding-left:2.8px">Sopir</div>
<div class="c" style="left:645.6px;top:636.32px;width:53.799999999999955px;padding-right:2.5px;text-align:right">24</div>
<div class="c" style="left:699.4px;top:636.32px;width:52.85000000000002px;padding-left:2.8px">OB</div>
<div class="c" style="left:752.25px;top:636.32px;width:89.35000000000002px;padding-right:6.2px;text-align:right">3.777.000</div>
<div class="c" style="left:841.6px;top:636.32px;width:82.39999999999998px;padding-right:5.0px;text-align:right">90.648.000</div>
<div class="c" style="left:924px;top:636.32px;width:82.25px;padding-right:4.5px;text-align:right">90.648.000</div>
<div class="c" style="left:1006.25px;top:636.32px;width:72.75px;padding-right:5.5px;text-align:right">-</div>
<div class="c" style="left:1079px;top:636.32px;width:83.5px;padding-right:5.1px;text-align:right">52.878.000</div>
<div class="c" style="left:1162.5px;top:636.32px;width:94.0px;padding-right:6.0px;text-align:right">37.770.000</div>
<div class="c" style="left:1256.5px;top:636.32px;width:99.09999999999991px;padding-left:2.8px">B08</div>
<div class="c" style="left:1355.6px;top:636.32px;width:145.4000000000001px;padding-right:3.7px;text-align:right">30.216.000</div>
<div class="c" style="left:32.5px;top:653.0px;width:21.0px;padding-left:1.5px">3</div>
<div class="c" style="left:53.5px;top:653.0px;width:253.75px;padding-left:2.8px">Pengadilan Negeri Purwakarta</div>
<div class="c" style="left:307.25px;top:653.0px;width:54.25px;padding-left:2.8px">0200</div>
<div class="c" style="left:361.5px;top:653.0px;width:52.89999999999998px;padding-right:2.5px;text-align:right">2025</div>
<div class="c" style="left:414.4px;top:653.0px;width:53.60000000000002px;padding-left:2.8px">521111</div>
<div class="c" style="left:468px;top:653.0px;width:177.60000000000002px;padding-left:2.8px">Pramubakti</div>
<div class="c" style="left:645.6px;top:653.0px;width:53.799999999999955px;padding-right:2.5px;text-align:right">36</div>
<div class="c" style="left:699.4px;top:653.0px;width:52.85000000000002px;padding-left:2.8px">OB</div>
<div class="c" style="left:752.25px;top:653.0px;width:89.35000000000002px;padding-right:6.2px;text-align:right">3.433.000</div>
<div class="c" style="left:841.6px;top:653.0px;width:82.39999999999998px;padding-right:5.0px;text-align:right">123.588.000</div>
<div class="c" style="left:924px;top:653.0px;width:82.25px;padding-right:4.5px;text-align:right">123.588.000</div>
<div class="c" style="left:1006.25px;top:653.0px;width:72.75px;padding-right:5.5px;text-align:right">-</div>
<div class="c" style="left:1079px;top:653.0px;width:83.5px;padding-right:5.1px;text-align:right">72.093.000</div>
<div class="c" style="left:1162.5px;top:653.0px;width:94.0px;padding-right:6.0px;text-align:right">51.495.000</div>
<div class="c" style="left:1256.5px;top:653.0px;width:99.09999999999991px;padding-left:2.8px">B08</div>
<div class="c" style="left:1355.6px;top:653.0px;width:145.4000000000001px;padding-right:3.7px;text-align:right">41.196.000</div>
<div class="c" style="left:32.5px;top:669.68px;width:21.0px;padding-left:1.5px">3</div>
<div class="c" style="left:53.5px;top:669.68px;width:253.75px;padding-left:2.8px">Pengadilan Negeri Purwakarta</div>
<div class="c" style="left:307.25px;top:669.68px;width:54.25px;padding-left:2.8px">0200</div>
<div class="c" style="left:361.5px;top:669.68px;width:52.89999999999998px;padding-right:2.5px;text-align:right">2025</div>
<div class="c" style="left:414.4px;top:669.68px;width:53.60000000000002px;padding-left:2.8px">521111</div>
<div class="c" style="left:468px;top:669.68px;width:177.60000000000002px;padding-left:2.8px">Satpam</div>
<div class="c" style="left:645.6px;top:669.68px;width:53.799999999999955px;padding-right:2.5px;text-align:right">24</div>
<div class="c" style="left:699.4px;top:669.68px;width:52.85000000000002px;padding-left:2.8px">OB</div>
<div class="c" style="left:752.25px;top:669.68px;width:89.35000000000002px;padding-right:6.2px;text-align:right">3.777.000</div>
<div class="c" style="left:841.6px;top:669.68px;width:82.39999999999998px;padding-right:5.0px;text-align:right">90.648.000</div>
<div class="c" style="left:924px;top:669.68px;width:82.25px;padding-right:4.5px;text-align:right">90.648.000</div>
<div class="c" style="left:1006.25px;top:669.68px;width:72.75px;padding-right:5.5px;text-align:right">-</div>
<div class="c" style="left:1079px;top:669.68px;width:83.5px;padding-right:5.1px;text-align:right">52.878.000</div>
<div class="c" style="left:1162.5px;top:669.68px;width:94.0px;padding-right:6.0px;text-align:right">37.770.000</div>
<div class="c" style="left:1256.5px;top:669.68px;width:99.09999999999991px;padding-left:2.8px">B08</div>
<div class="c" style="left:1355.6px;top:669.68px;width:145.4000000000001px;padding-right:3.7px;text-align:right">30.216.000</div>
<div class="c" style="left:32.5px;top:686.36px;width:21.0px;padding-left:1.5px">0</div>
<div class="c" style="left:53.5px;top:686.36px;width:253.75px;padding-left:2.8px">Pengadilan Negeri Bekasi</div>
<div class="c" style="left:307.25px;top:686.36px;width:54.25px;padding-left:2.8px">0200</div>
<div class="c" style="left:361.5px;top:686.36px;width:52.89999999999998px;padding-right:2.5px;text-align:right">2025</div>
<div class="c" style="left:414.4px;top:686.36px;width:53.60000000000002px;padding-left:2.8px">521111</div>
<div class="c" style="left:468px;top:686.36px;width:177.60000000000002px;padding-left:2.8px">Pengadaan Pakain Dinas Pengemudi</div>
<div class="c" style="left:645.6px;top:686.36px;width:53.799999999999955px;padding-right:2.5px;text-align:right">4</div>
<div class="c" style="left:699.4px;top:686.36px;width:52.85000000000002px;padding-left:2.8px">Stel</div>
<div class="c" style="left:752.25px;top:686.36px;width:89.35000000000002px;padding-right:4.8px;text-align:right">500.000</div>
<div class="c" style="left:841.6px;top:686.36px;width:82.39999999999998px;padding-right:5.0px;text-align:right">2.000.000</div>
<div class="c" style="left:924px;top:686.36px;width:82.25px;padding-right:4.5px;text-align:right">2.000.000</div>
<div class="c" style="left:1006.25px;top:686.36px;width:72.75px;padding-right:5.5px;text-align:right">-</div>
<div class="c" style="left:1079px;top:686.36px;width:83.5px;padding-right:5.5px;text-align:right">-</div>
<div class="c" style="left:1162.5px;top:686.36px;width:94.0px;padding-right:3.8px;text-align:right">2.000.000</div>
<div class="c" style="left:1256.5px;top:686.36px;width:99.09999999999991px;padding-left:2.8px">B07</div>
<div class="c" style="left:1355.6px;top:686.36px;width:145.4000000000001px;padding-right:3.7px;text-align:right">1.600.000</div>
<div class="c" style="left:1501px;top:686.36px;width:86.59999999999991px;padding-right:2.4px;text-align:right">0</div>
<div class="c" style="left:32.5px;top:703.04px;width:21.0px;padding-left:1.5px">0</div>
<div class="c" style="left:53.5px;top:703.04px;width:253.75px;padding-left:2.8px">Pengadilan Negeri Bekasi</div>
<div class="c" style="left:307.25px;top:703.04px;width:54.25px;padding-left:2.8px">0200</div>
<div class="c" style="left:361.5px;top:703.04px;width:52.89999999999998px;padding-right:2.5px;text-align:right">2025</div>
<div class="c" style="left:414.4px;top:703.04px;width:53.60000000000002px;padding-left:2.8px">521111</div>
<div class="c" style="left:468px;top:703.04px;width:177.60000000000002px;padding-left:2.8px">Sopir</div>
<div class="c" style="left:645.6px;top:703.04px;width:53.799999999999955px;padding-right:2.5px;text-align:right">24</div>
<div class="c" style="left:699.4px;top:703.04px;width:52.85000000000002px;padding-left:2.8px">OT</div>
<div class="c" style="left:752.25px;top:703.04px;width:89.35000000000002px;padding-right:6.2px;text-align:right">3.777.000</div>
<div class="c" style="left:841.6px;top:703.04px;width:82.39999999999998px;padding-right:5.0px;text-align:right">90.648.000</div>
<div class="c" style="left:924px;top:703.04px;width:82.25px;padding-right:4.5px;text-align:right">90.648.000</div>
<div class="c" style="left:1006.25px;top:703.04px;width:72.75px;padding-right:5.5px;text-align:right">-</div>
<div class="c" style="left:1079px;top:703.04px;width:83.5px;padding-right:5.1px;text-align:right">52.878.000</div>
<div class="c" style="left:1162.5px;top:703.04px;width:94.0px;padding-right:6.0px;text-align:right">37.770.000</div>
<div class="c" style="left:1256.5px;top:703.04px;width:99.09999999999991px;padding-left:2.8px">B07</div>
<div class="c" style="left:1355.6px;top:703.04px;width:145.4000000000001px;padding-right:3.7px;text-align:right">30.216.000</div>
<div class="c" style="left:32.5px;top:719.72px;width:21.0px;padding-left:1.5px">0</div>
<div class="c" style="left:53.5px;top:719.72px;width:253.75px;padding-left:2.8px">Pengadilan Negeri Bekasi</div>
<div class="c" style="left:307.25px;top:719.72px;width:54.25px;padding-left:2.8px">0200</div>
<div class="c" style="left:361.5px;top:719.72px;width:52.89999999999998px;padding-right:2.5px;text-align:right">2025</div>
<div class="c" style="left:414.4px;top:719.72px;width:53.60000000000002px;padding-left:2.8px">521111</div>
<div class="c" style="left:468px;top:719.72px;width:177.60000000000002px;padding-left:2.8px">Satpam</div>
<div class="c" style="left:645.6px;top:719.72px;width:53.799999999999955px;padding-right:2.5px;text-align:right">48</div>
<div class="c" style="left:699.4px;top:719.72px;width:52.85000000000002px;padding-left:2.8px">OT</div>
<div class="c" style="left:752.25px;top:719.72px;width:89.35000000000002px;padding-right:6.2px;text-align:right">3.777.000</div>
<div class="c" style="left:841.6px;top:719.72px;width:82.39999999999998px;padding-right:5.0px;text-align:right">181.296.000</div>
<div class="c" style="left:924px;top:719.72px;width:82.25px;padding-right:4.5px;text-align:right">181.296.000</div>
<div class="c" style="left:1006.25px;top:719.72px;width:72.75px;padding-right:5.5px;text-align:right">-</div>
<div class="c" style="left:1079px;top:719.72px;width:83.5px;padding-right:5.1px;text-align:right">105.756.000</div>
<div class="c" style="left:1162.5px;top:719.72px;width:94.0px;padding-right:6.0px;text-align:right">75.540.000</div>
<div class="c" style="left:1256.5px;top:719.72px;width:99.09999999999991px;padding-left:2.8px">B07</div>
<div class="c" style="left:1355.6px;top:719.72px;width:145.4000000000001px;padding-right:3.7px;text-align:right">60.432.000</div>
<div class="a" style="left:1589.6px;top:206.14px;width:1px;height:5px;background:#777"></div>
<div class="a" style="left:1589.6px;top:256.18px;width:1px;height:6px;background:#777"></div>
<div class="a" style="left:1589.6px;top:422.98px;width:1px;height:6px;background:#777"></div>
<div class="a" style="left:33px;top:316.8px;width:1558px;height:2px;background:#127b43"></div>
<div class="a" style="left:33px;top:367.8px;width:1558px;height:2px;background:#127b43"></div>
<div class="a" style="left:0;top:122.3px;width:1591px;height:16.200000000000003px;background:#fff"></div>
<div class="a" style="left:0;top:122.3px;width:32px;height:16.200000000000003px;background:#f4f4f4"></div>
<div class="t" style="left:0;top:124.3px;width:28.6px;text-align:right;font-size:10.8px;line-height:15.5px;color:#616161;transform:scaleY(1.1);transform-origin:0 60%">1</div>
<div class="a" style="left:32px;top:122.3px;width:1px;height:16.200000000000003px;background:#d4d4d4"></div>
<div class="a" style="left:53.0px;top:122.3px;width:1px;height:16.200000000000003px;background:#e5e5e5"></div>
<div class="a" style="left:306.75px;top:122.3px;width:1px;height:16.200000000000003px;background:#e5e5e5"></div>
<div class="a" style="left:361.0px;top:122.3px;width:1px;height:16.200000000000003px;background:#e5e5e5"></div>
<div class="a" style="left:413.9px;top:122.3px;width:1px;height:16.200000000000003px;background:#e5e5e5"></div>
<div class="a" style="left:467.5px;top:122.3px;width:1px;height:16.200000000000003px;background:#e5e5e5"></div>
<div class="a" style="left:645.1px;top:122.3px;width:1px;height:16.200000000000003px;background:#e5e5e5"></div>
<div class="a" style="left:698.9px;top:122.3px;width:1px;height:16.200000000000003px;background:#e5e5e5"></div>
<div class="a" style="left:751.75px;top:122.3px;width:1px;height:16.200000000000003px;background:#e5e5e5"></div>
<div class="a" style="left:841.1px;top:122.3px;width:1px;height:16.200000000000003px;background:#e5e5e5"></div>
<div class="a" style="left:923.5px;top:122.3px;width:1px;height:16.200000000000003px;background:#e5e5e5"></div>
<div class="a" style="left:1005.75px;top:122.3px;width:1px;height:16.200000000000003px;background:#e5e5e5"></div>
<div class="a" style="left:1078.5px;top:122.3px;width:1px;height:16.200000000000003px;background:#e5e5e5"></div>
<div class="a" style="left:1162.0px;top:122.3px;width:1px;height:16.200000000000003px;background:#e5e5e5"></div>
<div class="a" style="left:1256.0px;top:122.3px;width:1px;height:16.200000000000003px;background:#e5e5e5"></div>
<div class="a" style="left:1355.1px;top:122.3px;width:1px;height:16.200000000000003px;background:#e5e5e5"></div>
<div class="a" style="left:1500.5px;top:122.3px;width:1px;height:16.200000000000003px;background:#e5e5e5"></div>
<div class="a" style="left:1587.1px;top:122.3px;width:1px;height:16.200000000000003px;background:#e5e5e5"></div>
<div class="c" style="left:32.5px;top:124.4px;width:20.0px;padding-left:1.5px;height:15px;line-height:15px">k</div>
<div class="fb" style="left:38.7px;top:123.9px;width:13.4px;height:13.7px"><svg width="6" height="4" viewBox="0 0 6 4"><path d="M0.6 0.6 L3 3.2 L5.4 0.6" fill="none" stroke="#808080" stroke-width="0.85"/></svg></div>
<div class="c" style="left:53.5px;top:124.4px;width:252.75px;padding-left:2.2px;height:15px;line-height:15px">satker</div>
<div class="fb" style="left:292.45000000000005px;top:123.9px;width:13.4px;height:13.7px"><svg width="6" height="4" viewBox="0 0 6 4"><path d="M0.6 0.6 L3 3.2 L5.4 0.6" fill="none" stroke="#808080" stroke-width="0.85"/></svg></div>
<div class="c" style="left:307.25px;top:124.4px;width:53.25px;padding-left:2.2px;height:15px;line-height:15px">wil</div>
<div class="fb" style="left:346.70000000000005px;top:123.9px;width:13.4px;height:13.7px"><svg width="6" height="4" viewBox="0 0 6 4"><path d="M0.6 0.6 L3 3.2 L5.4 0.6" fill="none" stroke="#808080" stroke-width="0.85"/></svg></div>
<div class="c" style="left:361.5px;top:124.4px;width:51.89999999999998px;padding-left:2.2px;height:15px;line-height:15px">thang</div>
<div class="fb" style="left:399.6px;top:123.9px;width:13.4px;height:13.7px"><svg width="6" height="4" viewBox="0 0 6 4"><path d="M0.6 0.6 L3 3.2 L5.4 0.6" fill="none" stroke="#808080" stroke-width="0.85"/></svg></div>
<div class="c" style="left:414.4px;top:124.4px;width:52.60000000000002px;padding-left:2.2px;height:15px;line-height:15px">kode_akun</div>
<div class="fb" style="left:453.20000000000005px;top:123.9px;width:13.4px;height:13.7px"><svg width="6" height="4" viewBox="0 0 6 4"><path d="M0.6 0.6 L3 3.2 L5.4 0.6" fill="none" stroke="#808080" stroke-width="0.85"/></svg></div>
<div class="c" style="left:468px;top:124.4px;width:176.60000000000002px;padding-left:2.2px;height:15px;line-height:15px">uraian_item</div>
<div class="fb" style="left:630.8000000000001px;top:123.9px;width:13.4px;height:13.7px"><svg width="6" height="4" viewBox="0 0 6 4"><path d="M0.6 0.6 L3 3.2 L5.4 0.6" fill="none" stroke="#808080" stroke-width="0.85"/></svg></div>
<div class="c" style="left:645.6px;top:124.4px;width:52.799999999999955px;padding-left:2.2px;height:15px;line-height:15px">volkeg</div>
<div class="fb" style="left:684.6px;top:123.9px;width:13.4px;height:13.7px"><svg width="6" height="4" viewBox="0 0 6 4"><path d="M0.6 0.6 L3 3.2 L5.4 0.6" fill="none" stroke="#808080" stroke-width="0.85"/></svg></div>
<div class="c" style="left:699.4px;top:124.4px;width:51.85000000000002px;padding-left:2.2px;height:15px;line-height:15px">satkeg</div>
<div class="fb" style="left:737.45px;top:123.9px;width:13.4px;height:13.7px"><svg width="6" height="4" viewBox="0 0 6 4"><path d="M0.6 0.6 L3 3.2 L5.4 0.6" fill="none" stroke="#808080" stroke-width="0.85"/></svg></div>
<div class="c" style="left:752.25px;top:124.4px;width:88.35000000000002px;padding-left:5.3px;height:15px;line-height:15px">hargasat</div>
<div class="fb" style="left:826.8000000000001px;top:123.9px;width:13.4px;height:13.7px"><svg width="6" height="4" viewBox="0 0 6 4"><path d="M0.6 0.6 L3 3.2 L5.4 0.6" fill="none" stroke="#808080" stroke-width="0.85"/></svg></div>
<div class="c" style="left:841.6px;top:124.4px;width:81.39999999999998px;padding-left:5.3px;height:15px;line-height:15px">pagu_awal</div>
<div class="fb" style="left:909.2px;top:123.9px;width:13.4px;height:13.7px"><svg width="6" height="4" viewBox="0 0 6 4"><path d="M0.6 0.6 L3 3.2 L5.4 0.6" fill="none" stroke="#808080" stroke-width="0.85"/></svg></div>
<div class="c" style="left:924px;top:124.4px;width:81.25px;padding-left:5.3px;height:15px;line-height:15px">pagu_akhir</div>
<div class="fb" style="left:991.45px;top:123.9px;width:13.4px;height:13.7px"><svg width="6" height="4" viewBox="0 0 6 4"><path d="M0.6 0.6 L3 3.2 L5.4 0.6" fill="none" stroke="#808080" stroke-width="0.85"/></svg></div>
<div class="c" style="left:1006.25px;top:124.4px;width:71.75px;padding-left:5.3px;height:15px;line-height:15px">pergeseran</div>
<div class="fb" style="left:1064.1999999999998px;top:123.9px;width:13.4px;height:13.7px"><svg width="6" height="4" viewBox="0 0 6 4"><path d="M0.6 0.6 L3 3.2 L5.4 0.6" fill="none" stroke="#808080" stroke-width="0.85"/></svg></div>
<div class="c" style="left:1079px;top:124.4px;width:82.5px;padding-left:5.3px;height:15px;line-height:15px">realisasi</div>
<div class="fb" style="left:1147.6999999999998px;top:123.9px;width:13.4px;height:13.7px"><svg width="6" height="4" viewBox="0 0 6 4"><path d="M0.6 0.6 L3 3.2 L5.4 0.6" fill="none" stroke="#808080" stroke-width="0.85"/></svg></div>
<div class="c" style="left:1162.5px;top:124.4px;width:93.0px;padding-left:5.3px;height:15px;line-height:15px">sisa</div>
<div class="fb" style="left:1241.6999999999998px;top:123.9px;width:13.4px;height:13.7px"><svg width="6" height="4" viewBox="0 0 6 4"><path d="M0.6 0.6 L3 3.2 L5.4 0.6" fill="none" stroke="#808080" stroke-width="0.85"/></svg></div>
<div class="c" style="left:1256.5px;top:124.4px;width:98.09999999999991px;padding-left:2.2px;height:15px;line-height:15px">kode_sts_history</div>
<div class="fb" style="left:1340.7999999999997px;top:123.9px;width:13.4px;height:13.7px"><svg width="6" height="4" viewBox="0 0 6 4"><path d="M0.6 0.6 L3 3.2 L5.4 0.6" fill="none" stroke="#808080" stroke-width="0.85"/></svg></div>
<div class="c" style="left:1355.6px;top:124.4px;width:144.4000000000001px;padding-left:5.3px;height:15px;line-height:15px">Potensi Pagu yang ditarik</div>
<div class="fb" style="left:1486.1999999999998px;top:123.9px;width:13.4px;height:13.7px"><svg width="6" height="4" viewBox="0 0 6 4"><path d="M0.6 0.6 L3 3.2 L5.4 0.6" fill="none" stroke="#808080" stroke-width="0.85"/></svg></div>
<div class="c" style="left:1501px;top:124.4px;width:85.59999999999991px;padding-left:5.3px;height:15px;line-height:15px">Final Penarikan</div>
<div class="fb" style="left:1572.7999999999997px;top:123.9px;width:13.4px;height:13.7px"><svg width="6" height="4" viewBox="0 0 6 4"><path d="M0.6 0.6 L3 3.2 L5.4 0.6" fill="none" stroke="#808080" stroke-width="0.85"/></svg></div>
<div class="a" style="left:0;top:137.5px;width:1591px;height:1.3px;background:#9a9a9a"></div>
<div class="a" style="left:1591px;top:98px;width:9px;height:636px;background:#ebebeb"></div>
<svg class="a" style="left:1592px;top:101px" width="8" height="6" viewBox="0 0 8 6"><path d="M0.5 5.5 L4 0.8 L7.5 5.5 Z" fill="#8a8a8a"/></svg>
<div class="a" style="left:1593.3px;top:120.8px;width:4.8px;height:36.5px;border-radius:2.4px;background:#8a8a8a"></div>
<svg class="a" style="left:1592px;top:725px" width="8" height="6" viewBox="0 0 8 6"><path d="M0.5 0.5 L4 5.2 L7.5 0.5 Z" fill="#8a8a8a"/></svg>
<div class="a" style="left:0;top:734px;width:1600px;height:9.8px;background:#e8e8e8"></div>
<svg class="a" style="left:1px;top:735px" width="6" height="8" viewBox="0 0 6 8"><path d="M5.5 0.5 L0.8 4 L5.5 7.5 Z" fill="#8a8a8a"/></svg>
<div class="a" style="left:66px;top:735.8px;width:998px;height:5.1px;border-radius:2.5px;background:#888"></div>
<svg class="a" style="left:1582px;top:735px" width="6" height="8" viewBox="0 0 6 8"><path d="M0.5 0.5 L5.2 4 L0.5 7.5 Z" fill="#8a8a8a"/></svg>
<svg class="a" style="left:8px;top:753px" width="6" height="8" viewBox="0 0 6 8"><path d="M5 0.5 L1 4 L5 7.5" fill="none" stroke="#b0b0b0" stroke-width="1"/></svg>
<svg class="a" style="left:35px;top:753px" width="6" height="8" viewBox="0 0 6 8"><path d="M1 0.5 L5 4 L1 7.5" fill="none" stroke="#b0b0b0" stroke-width="1"/></svg>
<svg class="a" style="left:58.5px;top:752.5px" width="11" height="8" viewBox="0 0 11 8"><path d="M0.5 1 H10.5 M0.5 4 H10.5 M0.5 7 H10.5" stroke="#424242" stroke-width="0.9"/></svg>
<svg class="a" style="left:86.5px;top:749.5px" width="11" height="11" viewBox="0 0 11 11"><rect x="1" y="4.5" width="9" height="6" rx="1" fill="none" stroke="#424242" stroke-width="1"/><path d="M3 4.5 V3 C3 1.8 4 1 5.5 1 C7 1 8 1.8 8 3 V4.5" fill="none" stroke="#424242" stroke-width="1"/><circle cx="5.5" cy="7.5" r="0.9" fill="#424242"/></svg>
<div class="t" style="left:101.5px;top:749px;font-size:10.4px;font-weight:bold;line-height:15px;color:#242424">Sheet1</div>
<div class="t" style="left:152px;top:749px;font-size:10.8px;line-height:15px;color:#424242">Lembar1</div>
<svg class="a" style="left:211.5px;top:752.5px" width="10" height="9" viewBox="0 0 10 9"><path d="M5 0 V9 M0.2 4.5 H9.8" stroke="#424242" stroke-width="1"/></svg>
</body></html>
